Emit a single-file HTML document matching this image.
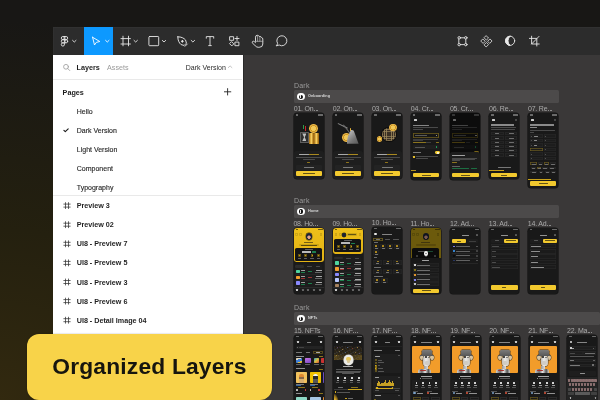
<!DOCTYPE html>
<html><head><meta charset="utf-8">
<style>
*{margin:0;padding:0;box-sizing:border-box}
html,body{width:600px;height:400px;overflow:hidden}
body{position:relative;font-family:"Liberation Sans",sans-serif;
background:radial-gradient(ellipse 420px 380px at 0px 400px,#32290f 0%,#24200f 45%,#181715 100%);}
.abs{position:absolute}
#toolbar{left:52.8px;top:26.8px;width:547.2px;height:28.2px;background:#2c2c2c;box-shadow:inset 0.7px 0.7px 0 #333}
#blue{left:83.5px;top:27px;width:29px;height:28.5px;background:#0d99ff}
#panel{left:53px;top:55.4px;width:189.6px;height:345px;background:#fff}
#canvas{left:243px;top:55.2px;width:357px;height:345px;background:#3a3838;border-left:1.5px solid #2a2a2a}
#tline{left:53px;top:54.6px;width:547px;height:0.9px;background:#232323}
#label{left:27px;top:333.8px;width:245px;height:65.5px;background:#f8d349;border-radius:12px;box-shadow:0 0 1.2px rgba(0,0,0,.55)}
#label span{position:absolute;left:25.3px;top:18.8px;font-weight:bold;font-size:22.8px;letter-spacing:0.18px;color:#16150f;white-space:nowrap}
svg{position:absolute;left:0;top:0}
.t{position:absolute;white-space:nowrap;line-height:1}
#pc,#cv,#label{will-change:transform}
.b{font-weight:bold}

#cv i{position:absolute;display:block}
.ph{position:absolute;background:#191919;border-radius:3.2px;overflow:hidden;box-shadow:0 0 0 0.6px #121212}
.ph i{position:absolute;display:block}
</style></head><body>
<div id="toolbar" class="abs"></div>
<div id="tline" class="abs"></div>
<div id="blue" class="abs"></div>
<div id="panel" class="abs"></div>
<div id="canvas" class="abs"></div>
<div id="pc" class="abs" style="left:0;top:0">
<div class="t b" style="left:76.6px;top:64.1px;font-size:7.2px;color:#1e1e1e">Layers</div>
<div class="t" style="left:107px;top:64.1px;font-size:7.2px;color:#9a9a9a">Assets</div>
<div class="t" style="left:185.8px;top:64.1px;font-size:7.0px;color:#2a2a2a">Dark Version</div>
<div class="abs" style="left:53px;top:79px;width:189px;height:0.8px;background:#e9e9e9"></div>
<div class="t b" style="left:62.6px;top:88.5px;font-size:7.2px;color:#1e1e1e">Pages</div>
<div class="t" style="left:76.8px;top:108.0px;font-size:7.0px;color:#262626;-webkit-text-stroke:0.12px #262626">Hello</div>
<div class="t" style="left:76.8px;top:127.0px;font-size:7.0px;color:#1e1e1e;-webkit-text-stroke:0.12px #262626">Dark Version</div>
<div class="t" style="left:76.8px;top:146.1px;font-size:7.0px;color:#262626;-webkit-text-stroke:0.12px #262626">Light Version</div>
<div class="t" style="left:76.8px;top:165.2px;font-size:7.0px;color:#262626;-webkit-text-stroke:0.12px #262626">Component</div>
<div class="t" style="left:76.8px;top:184.3px;font-size:7.0px;color:#262626;-webkit-text-stroke:0.12px #262626">Typography</div>
<div class="abs" style="left:53px;top:195.2px;width:189px;height:0.8px;background:#e9e9e9"></div>
<div class="t b" style="left:76.7px;top:202.1px;font-size:7.2px;color:#1e1e1e">Preview 3</div>
<div class="t b" style="left:76.7px;top:221.2px;font-size:7.2px;color:#1e1e1e">Preview 02</div>
<div class="t b" style="left:76.7px;top:240.3px;font-size:7.2px;color:#1e1e1e">UI8 - Preview 7</div>
<div class="t b" style="left:76.7px;top:259.4px;font-size:7.2px;color:#1e1e1e">UI8 - Preview 5</div>
<div class="t b" style="left:76.7px;top:278.5px;font-size:7.2px;color:#1e1e1e">UI8 - Preview 3</div>
<div class="t b" style="left:76.7px;top:297.6px;font-size:7.2px;color:#1e1e1e">UI8 - Preview 6</div>
<div class="t b" style="left:76.7px;top:316.7px;font-size:7.2px;color:#1e1e1e">UI8 - Detail Image 04</div>
</div>
<svg id="picons" width="600" height="400" viewBox="0 0 600 400" fill="none" stroke="#333" stroke-width="0.8" stroke-linecap="round" stroke-linejoin="round">
 <circle cx="66" cy="66.8" r="2.4" stroke="#9a9a9a"/>
 <path d="M67.8 68.6L69.8 70.6" stroke="#9a9a9a"/>
 <path d="M228.3 67.6L230.1 65.9L231.9 67.6" stroke="#aaa" stroke-width="0.7"/>
 <path d="M227.6 88.6V95M224.4 91.8H230.8" stroke="#222" stroke-width="0.9"/>
 <path d="M63.9 130.3L65.3 131.7L68.2 128.8" stroke="#1a1a1a" stroke-width="1.1"/>
 <g id="hash" stroke="#333" stroke-width="0.75">
<path d="M65.5 202.6V208.6M68.5 202.6V208.6M63.8 204.1H70.2M63.8 207.1H70.2"/>
<path d="M65.5 221.7V227.7M68.5 221.7V227.7M63.8 223.2H70.2M63.8 226.2H70.2"/>
<path d="M65.5 240.8V246.8M68.5 240.8V246.8M63.8 242.3H70.2M63.8 245.3H70.2"/>
<path d="M65.5 259.9V265.9M68.5 259.9V265.9M63.8 261.4H70.2M63.8 264.4H70.2"/>
<path d="M65.5 279.0V285.0M68.5 279.0V285.0M63.8 280.5H70.2M63.8 283.5H70.2"/>
<path d="M65.5 298.1V304.1M68.5 298.1V304.1M63.8 299.6H70.2M63.8 302.6H70.2"/>
<path d="M65.5 317.2V323.2M68.5 317.2V323.2M63.8 318.7H70.2M63.8 321.7H70.2"/>
 </g>
</svg>

<svg id="icons" width="600" height="400" viewBox="0 0 600 400" fill="none" stroke="#e8e8e8" stroke-width="0.9" stroke-linecap="round" stroke-linejoin="round">
 <!-- figma logo -->
 <g transform="translate(61.1,36.0)">
  <path d="M3.4 0.5H1.8A1.6 1.6 0 0 0 1.8 3.7H3.4Z"/>
  <path d="M3.4 0.5H5A1.6 1.6 0 0 1 5 3.7H3.4Z"/>
  <path d="M3.4 3.7H1.8A1.6 1.6 0 0 0 1.8 6.9H3.4Z"/>
  <circle cx="5" cy="5.3" r="1.6"/>
  <path d="M3.4 6.9H1.8A1.6 1.6 0 1 0 3.4 8.5Z"/>
 </g>
 <path d="M72.6 40.4L74.3 42L76 40.4"/>
 <!-- cursor -->
 <path d="M92.6 37.3L99.8 41.5L96.3 42.4L94.5 45L92.6 37.3Z" stroke="#fff"/>
 <path d="M105.6 40.4L107.3 42L109 40.4" stroke="#fff"/>
 <!-- frame -->
 <path d="M123 36.2V45.8M128.5 36.2V45.8M121 38.6H130.4M121 44H130.4"/>
 <path d="M134 40.4L135.7 42L137.4 40.4"/>
 <!-- rect -->
 <rect x="148.9" y="36.5" width="9.8" height="9.2" rx="0.8"/>
 <path d="M162.3 40.4L164 42L165.7 40.4"/>
 <!-- pen -->
 <g transform="translate(182.2,41.2) rotate(-45)">
  <path d="M0 -6.2C2.6 -3.6 3.4 -1 3.2 1.6L1.6 4.4H-1.6L-3.2 1.6C-3.4 -1 -2.6 -3.6 0 -6.2Z"/>
  <circle cx="0" cy="0.2" r="0.8" fill="#e8e8e8"/>
  <path d="M-1.6 5.6H1.6"/>
 </g>
 <path d="M191.2 40.4L192.9 42L194.6 40.4"/>
 <!-- T -->
 <path d="M206.3 38.6V36.6H213.7V38.6M210 36.6V45.6M208.3 45.6H211.7" stroke-linecap="butt"/>
 <!-- shapes -->
 <rect x="230" y="36.7" width="3.6" height="3.6"/>
 <path d="M237 36.5V40.5M235 38.5H239"/>
 <path d="M231.8 41.9L233.8 43.9L231.8 45.9L229.8 43.9Z"/>
 <rect x="235.3" y="42.1" width="3.6" height="3.6"/>
 <!-- hand -->
 <path d="M255.5 41.4V37.2Q255.5 35.3 257.3 35.3Q258.7 35.3 259.1 36.4Q261.3 36.2 261.5 37.6Q262.8 37.8 262.8 39V44Q262.8 47.3 259.2 47.3H258.3Q256.7 47.3 255.3 45.9L252.6 43.1Q251.9 42.2 252.6 41.5Q253.4 40.9 254.3 41.6L255.5 42.6"/>
 <path d="M257.6 36V41.2M259.9 36.8V41.2M255.5 41.3H262.8" stroke-width="0.7" stroke="#bdbdbd"/>
 <!-- comment -->
 <path d="M276.7 45.7L277.6 43.4A5 5 0 1 1 279.2 45L276.7 45.7Z"/>
 <!-- right icons -->
 <path d="M459.2 37.8H465.8V44.6H459.2Z"/>
 <circle cx="459.2" cy="37.8" r="1.25" fill="#2c2c2c"/>
 <circle cx="465.8" cy="37.8" r="1.25" fill="#2c2c2c"/>
 <circle cx="459.2" cy="44.6" r="1.25" fill="#2c2c2c"/>
 <circle cx="465.8" cy="44.6" r="1.25" fill="#2c2c2c"/>
 <g transform="translate(486.4,41.3)" stroke-width="0.8">
  <path d="M0 -5.4L2.1 -3.3L0 -1.2L-2.1 -3.3Z"/>
  <path d="M0 5.4L2.1 3.3L0 1.2L-2.1 3.3Z"/>
  <path d="M-5.4 0L-3.3 2.1L-1.2 0L-3.3 -2.1Z"/>
  <path d="M5.4 0L3.3 2.1L1.2 0L3.3 -2.1Z"/>
 </g>
 <circle cx="510.1" cy="40.8" r="4.6"/>
 <path d="M510.1 36.2A4.6 4.6 0 0 0 510.1 45.4A6 6 0 0 1 510.1 36.2Z" fill="#e8e8e8"/>
 <path d="M531.6 36.2V44H539.2M529.4 38.4H536.8V46M531.6 44L539 36.4"/>
</svg>
<div id="cv" class="abs" style="left:0;top:0;width:600px;height:400px;overflow:hidden">
<span class="t" style="left:294.00px;top:82.00px;font-size:7px;color:#9b9b9b;letter-spacing:0.2px">Dark</span>
<i style="left:293.60px;top:90.00px;width:265.10px;height:12.80px;background:#4c4a4a;border-radius:1.5px;"></i>
<i style="left:297.30px;top:92.70px;width:7.80px;height:7.80px;border-radius:50%;background:#fff;"></i>
<i style="left:299.20px;top:94.50px;width:4.20px;height:4.20px;border-radius:50%;background:#111;"></i>
<i style="left:299.70px;top:95.40px;width:0.60px;height:2.40px;background:#e8e8e8;"></i>
<span class="t" style="left:308.00px;top:95.00px;font-size:3.8px;color:#dadada;font-weight:bold;letter-spacing:0.05px">Onboarding</span>
<span class="t" style="left:293.70px;top:105.30px;font-size:7px;color:#ababab;letter-spacing:-0.2px">01. On<span style="display:inline-block;width:0.5px"></span><span style="display:inline-block;width:0.95px;height:0.95px;background:#8c8c8c;margin-right:0.7px"></span><span style="display:inline-block;width:0.95px;height:0.95px;background:#8c8c8c;margin-right:0.7px"></span><span style="display:inline-block;width:0.95px;height:0.95px;background:#8c8c8c;margin-right:0.7px"></span></span>
<div class="ph" style="left:294.00px;top:113.40px;width:30px;height:66.00px">
<i style="left:2.00px;top:1.00px;width:2.40px;height:1.30px;background:#6a6a6a;border-radius:0.3px;"></i>
<i style="left:24.20px;top:1.00px;width:4.80px;height:1.30px;background:#6a6a6a;border-radius:0.3px;"></i>
<i style="left:6.00px;top:18.40px;width:8.70px;height:10.80px;background:#5e5e5e;border-radius:0.5px;"></i>
<i style="left:6.80px;top:19.20px;width:7.10px;height:9.20px;background:#2e2e2e;border-radius:0.3px;"></i>
<i style="left:8.3px;top:20px;width:4.2px;height:7.6px;background:#bdbdbd;clip-path:polygon(0 0,100% 0,58% 50%,100% 100%,0 100%,42% 50%)"></i>
<i style="left:9.00px;top:11.60px;width:1.00px;height:3.80px;background:#2f9a4a;"></i>
<i style="left:10.60px;top:12.80px;width:1.00px;height:5.00px;background:#c92a2a;"></i>
<i style="left:15.00px;top:10.80px;width:9.20px;height:9.20px;border-radius:50%;background:radial-gradient(circle at 50% 50%,#f0c858 0 35%,#c88e1c 45%,#f0c050 62%,#a86e12 85%);"></i>
<i style="left:15.10px;top:19.90px;width:4.60px;height:10.70px;background:linear-gradient(90deg,#9a6410,#e8b848 35%,#f4cc60 50%,#b8801a 80%,#8a5810);border-radius:0.6px;"></i>
<i style="left:19.90px;top:19.90px;width:4.90px;height:10.70px;background:linear-gradient(90deg,#9a6410,#e8b848 35%,#f4cc60 50%,#b8801a 80%,#8a5810);border-radius:0.6px;"></i>
<i style="left:0.00px;top:37.20px;width:30.00px;height:28.80px;background:#1e1e1e;border-radius:2.8px;"></i>
<i style="left:5.20px;top:40.65px;width:9.90px;height:1.30px;background:#a8a8a8;border-radius:0.3px;"></i>
<i style="left:15.20px;top:40.65px;width:9.80px;height:1.30px;background:#a98920;border-radius:0.3px;"></i>
<i style="left:2.20px;top:43.85px;width:25.60px;height:0.70px;background:#4b4b4b;border-radius:0.3px;"></i>
<i style="left:9.20px;top:45.45px;width:11.60px;height:0.70px;background:#4b4b4b;border-radius:0.3px;"></i>
<i style="left:13.30px;top:48.85px;width:2.40px;height:0.70px;background:#90741b;border-radius:0.3px;"></i>
<i style="left:2.00px;top:51.90px;width:26.20px;height:4.40px;background:#232323;border-radius:0.9px;"></i>
<i style="left:9.80px;top:53.70px;width:10.60px;height:0.80px;background:#7a7a7a;border-radius:0.3px;"></i>
<i style="left:2.00px;top:57.70px;width:26.20px;height:4.90px;background:#f2c92e;border-radius:1.1px;"></i>
<i style="left:9.10px;top:59.75px;width:12.00px;height:0.80px;background:#625215;border-radius:0.3px;"></i>
</div>
<span class="t" style="left:332.70px;top:105.30px;font-size:7px;color:#ababab;letter-spacing:-0.2px">02. On<span style="display:inline-block;width:0.5px"></span><span style="display:inline-block;width:0.95px;height:0.95px;background:#8c8c8c;margin-right:0.7px"></span><span style="display:inline-block;width:0.95px;height:0.95px;background:#8c8c8c;margin-right:0.7px"></span><span style="display:inline-block;width:0.95px;height:0.95px;background:#8c8c8c;margin-right:0.7px"></span></span>
<div class="ph" style="left:333.00px;top:113.40px;width:30px;height:66.00px">
<i style="left:2.00px;top:1.00px;width:2.40px;height:1.30px;background:#6a6a6a;border-radius:0.3px;"></i>
<i style="left:24.20px;top:1.00px;width:4.80px;height:1.30px;background:#6a6a6a;border-radius:0.3px;"></i>
<i style="left:4.6px;top:9.6px;width:11px;height:1.4px;background:#8a8a8a;transform:rotate(26deg);transform-origin:0 0;border-radius:1px"></i>
<i style="left:10.4px;top:11.8px;width:1.2px;height:13px;background:#6e6e6e;transform:rotate(-38deg);transform-origin:0 0"></i>
<i style="left:8.80px;top:19.20px;width:9.20px;height:9.20px;border-radius:50%;background:radial-gradient(circle at 50% 50%,#f0c858 0 35%,#c88e1c 45%,#f0c050 62%,#a86e12 85%);"></i>
<i style="left:13.6px;top:16.2px;width:12px;height:14.2px;background:linear-gradient(135deg,#cfcfcf,#777 60%,#555);clip-path:polygon(38% 0,60% 8%,100% 100%,0 100%,10% 50%)"></i>
<i style="left:17.00px;top:15.00px;width:1.20px;height:2.60px;background:#e7b43a;border-radius:0.5px;"></i>
<i style="left:0.00px;top:37.20px;width:30.00px;height:28.80px;background:#1e1e1e;border-radius:2.8px;"></i>
<i style="left:5.20px;top:40.65px;width:9.90px;height:1.30px;background:#a8a8a8;border-radius:0.3px;"></i>
<i style="left:15.20px;top:40.65px;width:9.80px;height:1.30px;background:#a98920;border-radius:0.3px;"></i>
<i style="left:2.20px;top:43.85px;width:25.60px;height:0.70px;background:#4b4b4b;border-radius:0.3px;"></i>
<i style="left:9.20px;top:45.45px;width:11.60px;height:0.70px;background:#4b4b4b;border-radius:0.3px;"></i>
<i style="left:13.30px;top:48.85px;width:2.40px;height:0.70px;background:#90741b;border-radius:0.3px;"></i>
<i style="left:2.00px;top:51.90px;width:26.20px;height:4.40px;background:#232323;border-radius:0.9px;"></i>
<i style="left:9.80px;top:53.70px;width:10.60px;height:0.80px;background:#7a7a7a;border-radius:0.3px;"></i>
<i style="left:2.00px;top:57.70px;width:26.20px;height:4.90px;background:#f2c92e;border-radius:1.1px;"></i>
<i style="left:9.10px;top:59.75px;width:12.00px;height:0.80px;background:#625215;border-radius:0.3px;"></i>
</div>
<span class="t" style="left:371.90px;top:105.30px;font-size:7px;color:#ababab;letter-spacing:-0.2px">03. On<span style="display:inline-block;width:0.5px"></span><span style="display:inline-block;width:0.95px;height:0.95px;background:#8c8c8c;margin-right:0.7px"></span><span style="display:inline-block;width:0.95px;height:0.95px;background:#8c8c8c;margin-right:0.7px"></span><span style="display:inline-block;width:0.95px;height:0.95px;background:#8c8c8c;margin-right:0.7px"></span></span>
<div class="ph" style="left:372.20px;top:113.40px;width:30px;height:66.00px">
<i style="left:2.00px;top:1.00px;width:2.40px;height:1.30px;background:#6a6a6a;border-radius:0.3px;"></i>
<i style="left:24.20px;top:1.00px;width:4.80px;height:1.30px;background:#6a6a6a;border-radius:0.3px;"></i>
<i style="left:10.20px;top:14.40px;width:13.20px;height:13.20px;border-radius:50%;background:repeating-linear-gradient(90deg,#8a7650 0 0.8px,#3a3024 0.8px 2.2px);box-shadow:0 0 0 1px #0c0c0c"></i>
<i style="left:10.20px;top:14.40px;width:13.20px;height:13.20px;border-radius:50%;background:repeating-linear-gradient(0deg,rgba(160,140,95,.65) 0 0.8px,transparent 0.8px 2.2px);"></i>
<i style="left:17.20px;top:10.20px;width:7.20px;height:7.20px;border-radius:50%;background:radial-gradient(circle at 50% 50%,#f0c858 0 35%,#c88e1c 45%,#f0c050 62%,#a86e12 85%);"></i>
<i style="left:4.40px;top:22.80px;width:5.60px;height:5.60px;border-radius:50%;background:radial-gradient(circle at 50% 50%,#f0c858 0 35%,#c88e1c 45%,#f0c050 62%,#a86e12 85%);"></i>
<i style="left:0.00px;top:37.20px;width:30.00px;height:28.80px;background:#1e1e1e;border-radius:2.8px;"></i>
<i style="left:5.20px;top:40.65px;width:9.90px;height:1.30px;background:#a8a8a8;border-radius:0.3px;"></i>
<i style="left:15.20px;top:40.65px;width:9.80px;height:1.30px;background:#a98920;border-radius:0.3px;"></i>
<i style="left:2.20px;top:43.85px;width:25.60px;height:0.70px;background:#4b4b4b;border-radius:0.3px;"></i>
<i style="left:9.20px;top:45.45px;width:11.60px;height:0.70px;background:#4b4b4b;border-radius:0.3px;"></i>
<i style="left:13.30px;top:48.85px;width:2.40px;height:0.70px;background:#90741b;border-radius:0.3px;"></i>
<i style="left:2.00px;top:51.90px;width:26.20px;height:4.40px;background:#232323;border-radius:0.9px;"></i>
<i style="left:9.80px;top:53.70px;width:10.60px;height:0.80px;background:#7a7a7a;border-radius:0.3px;"></i>
<i style="left:2.00px;top:57.70px;width:26.20px;height:4.90px;background:#f2c92e;border-radius:1.1px;"></i>
<i style="left:9.10px;top:59.75px;width:12.00px;height:0.80px;background:#625215;border-radius:0.3px;"></i>
</div>
<span class="t" style="left:410.80px;top:105.30px;font-size:7px;color:#ababab;letter-spacing:-0.2px">04. Cr<span style="display:inline-block;width:0.5px"></span><span style="display:inline-block;width:0.95px;height:0.95px;background:#8c8c8c;margin-right:0.7px"></span><span style="display:inline-block;width:0.95px;height:0.95px;background:#8c8c8c;margin-right:0.7px"></span><span style="display:inline-block;width:0.95px;height:0.95px;background:#8c8c8c;margin-right:0.7px"></span></span>
<div class="ph" style="left:411.10px;top:113.40px;width:30px;height:66.40px">
<i style="left:2.00px;top:1.00px;width:2.40px;height:1.30px;background:#6a6a6a;border-radius:0.3px;"></i>
<i style="left:24.20px;top:1.00px;width:4.80px;height:1.30px;background:#6a6a6a;border-radius:0.3px;"></i>
<i style="left:3.00px;top:5.80px;width:2.50px;height:2.10px;background:#d0d0d0;border-radius:0.6px;"></i>
<i style="left:2.20px;top:11.15px;width:15.70px;height:1.30px;background:#868686;border-radius:0.3px;"></i>
<i style="left:2.20px;top:13.95px;width:24.80px;height:0.70px;background:#4a4a4a;border-radius:0.3px;"></i>
<i style="left:2.20px;top:15.35px;width:10.00px;height:0.70px;background:#4a4a4a;border-radius:0.3px;"></i>
<i style="left:1.80px;top:19.40px;width:26.40px;height:5.00px;background:#161616;border-radius:1.2px;box-shadow:inset 0 0 0 0.55px #9c8220"></i>
<i style="left:4.00px;top:21.55px;width:12.00px;height:0.70px;background:#5a5a5a;border-radius:0.3px;"></i>
<i style="left:24.80px;top:21.20px;width:1.60px;height:1.40px;background:#cfcfcf;border-radius:0.4px;"></i>
<i style="left:2.20px;top:25.65px;width:24.80px;height:0.70px;background:#3e3e3e;border-radius:0.3px;"></i>
<i style="left:2.20px;top:27.05px;width:10.00px;height:0.70px;background:#3e3e3e;border-radius:0.3px;"></i>
<i style="left:2.20px;top:28.50px;width:13.00px;height:0.80px;background:#8c751e;border-radius:0.3px;"></i>
<i style="left:15.40px;top:28.60px;width:4.60px;height:0.60px;background:#3e3e3e;border-radius:0.3px;"></i>
<i style="left:24.80px;top:28.50px;width:3.00px;height:0.80px;background:#8c751e;border-radius:0.3px;"></i>
<i style="left:1.80px;top:31.80px;width:26.40px;height:3.40px;background:#1f1f1f;border-radius:0.8px;"></i>
<i style="left:3.60px;top:33.15px;width:10.00px;height:0.70px;background:#555;border-radius:0.3px;"></i>
<i style="left:24.80px;top:32.80px;width:1.50px;height:1.60px;background:#1f9c5c;border-radius:0.3px;"></i>
<i style="left:2.20px;top:38.85px;width:8.00px;height:0.70px;background:#7a7a7a;border-radius:0.3px;"></i>
<i style="left:23.60px;top:37.90px;width:5.00px;height:2.80px;background:#f2c92e;border-radius:1.4px;"></i>
<i style="left:25.50px;top:38.20px;width:2.20px;height:2.20px;border-radius:50%;background:#fff;"></i>
<i style="left:2.00px;top:43.10px;width:2.00px;height:2.00px;background:#f2c92e;border-radius:0.4px;"></i>
<i style="left:5.40px;top:43.05px;width:22.00px;height:0.70px;background:#4a4a4a;border-radius:0.3px;"></i>
<i style="left:5.40px;top:44.45px;width:12.00px;height:0.70px;background:#4a4a4a;border-radius:0.3px;"></i>
<i style="left:0.00px;top:56.70px;width:4.60px;height:0.80px;background:#b8951c;"></i>
<i style="left:2.00px;top:59.40px;width:26.40px;height:4.40px;background:#f2c92e;border-radius:1.1px;"></i>
<i style="left:10.70px;top:61.20px;width:9.00px;height:0.80px;background:#625215;border-radius:0.3px;"></i>
</div>
<span class="t" style="left:449.90px;top:105.30px;font-size:7px;color:#ababab;letter-spacing:-0.2px">05. Cr<span style="display:inline-block;width:0.5px"></span><span style="display:inline-block;width:0.95px;height:0.95px;background:#8c8c8c;margin-right:0.7px"></span><span style="display:inline-block;width:0.95px;height:0.95px;background:#8c8c8c;margin-right:0.7px"></span><span style="display:inline-block;width:0.95px;height:0.95px;background:#8c8c8c;margin-right:0.7px"></span></span>
<div class="ph" style="left:450.20px;top:113.40px;width:30px;height:66.40px">
<i style="left:2.00px;top:1.00px;width:2.40px;height:1.30px;background:#6a6a6a;border-radius:0.3px;"></i>
<i style="left:24.20px;top:1.00px;width:4.80px;height:1.30px;background:#6a6a6a;border-radius:0.3px;"></i>
<i style="left:3.00px;top:5.80px;width:2.50px;height:2.10px;background:#d0d0d0;border-radius:0.6px;"></i>
<i style="left:2.20px;top:11.15px;width:15.70px;height:1.30px;background:#868686;border-radius:0.3px;"></i>
<i style="left:2.20px;top:13.95px;width:24.80px;height:0.70px;background:#4a4a4a;border-radius:0.3px;"></i>
<i style="left:2.20px;top:15.35px;width:10.00px;height:0.70px;background:#4a4a4a;border-radius:0.3px;"></i>
<i style="left:1.80px;top:19.40px;width:26.40px;height:5.00px;background:#161616;border-radius:1.2px;box-shadow:inset 0 0 0 0.55px #9c8220"></i>
<i style="left:4.00px;top:21.55px;width:12.00px;height:0.70px;background:#5a5a5a;border-radius:0.3px;"></i>
<i style="left:24.80px;top:21.20px;width:1.60px;height:1.40px;background:#cfcfcf;border-radius:0.4px;"></i>
<i style="left:2.20px;top:25.65px;width:24.80px;height:0.70px;background:#3e3e3e;border-radius:0.3px;"></i>
<i style="left:2.20px;top:27.05px;width:10.00px;height:0.70px;background:#3e3e3e;border-radius:0.3px;"></i>
<i style="left:2.20px;top:28.50px;width:13.00px;height:0.80px;background:#8c751e;border-radius:0.3px;"></i>
<i style="left:15.40px;top:28.60px;width:4.60px;height:0.60px;background:#3e3e3e;border-radius:0.3px;"></i>
<i style="left:24.80px;top:28.50px;width:3.00px;height:0.80px;background:#8c751e;border-radius:0.3px;"></i>
<i style="left:1.80px;top:31.80px;width:26.40px;height:3.40px;background:#1f1f1f;border-radius:0.8px;"></i>
<i style="left:3.60px;top:33.15px;width:10.00px;height:0.70px;background:#555;border-radius:0.3px;"></i>
<i style="left:24.80px;top:32.80px;width:1.50px;height:1.60px;background:#1f9c5c;border-radius:0.3px;"></i>
<i style="left:2.20px;top:38.85px;width:8.00px;height:0.70px;background:#7a7a7a;border-radius:0.3px;"></i>
<i style="left:23.60px;top:37.90px;width:5.00px;height:2.80px;background:#f2c92e;border-radius:1.4px;"></i>
<i style="left:25.50px;top:38.20px;width:2.20px;height:2.20px;border-radius:50%;background:#fff;"></i>
<i style="left:2.00px;top:43.10px;width:2.00px;height:2.00px;background:#f2c92e;border-radius:0.4px;"></i>
<i style="left:5.40px;top:43.05px;width:22.00px;height:0.70px;background:#4a4a4a;border-radius:0.3px;"></i>
<i style="left:5.40px;top:44.45px;width:12.00px;height:0.70px;background:#4a4a4a;border-radius:0.3px;"></i>
<i style="left:0.00px;top:56.70px;width:4.60px;height:0.80px;background:#b8951c;"></i>
<i style="left:0.00px;top:0.00px;width:30.00px;height:66.40px;background:rgba(0,0,0,0.5);"></i>
<i style="left:0.00px;top:38.80px;width:30.00px;height:27.60px;background:#1d1d1d;border-radius:2.6px;"></i>
<i style="left:2.20px;top:41.40px;width:12.50px;height:1.20px;background:#a1a1a1;border-radius:0.3px;"></i>
<i style="left:2.20px;top:44.25px;width:25.00px;height:0.70px;background:#4a4a4a;border-radius:0.3px;"></i>
<i style="left:2.20px;top:45.65px;width:22.50px;height:0.70px;background:#4a4a4a;border-radius:0.3px;"></i>
<i style="left:2.20px;top:47.05px;width:8.00px;height:0.70px;background:#4a4a4a;border-radius:0.3px;"></i>
<i style="left:2.20px;top:48.80px;width:5.00px;height:0.80px;background:#8c751e;border-radius:0.3px;"></i>
<i style="left:2.20px;top:52.45px;width:8.00px;height:0.70px;background:#626262;border-radius:0.3px;"></i>
<i style="left:2.20px;top:54.80px;width:17.00px;height:0.80px;background:#1c6e42;border-radius:0.3px;"></i>
<i style="left:20.50px;top:54.80px;width:6.00px;height:0.80px;background:#1c6e42;border-radius:0.3px;"></i>
<i style="left:2.00px;top:59.40px;width:26.40px;height:4.40px;background:#f2c92e;border-radius:1.1px;"></i>
<i style="left:10.70px;top:61.20px;width:9.00px;height:0.80px;background:#625215;border-radius:0.3px;"></i>
</div>
<span class="t" style="left:488.95px;top:105.30px;font-size:7px;color:#ababab;letter-spacing:-0.2px">06. Re<span style="display:inline-block;width:0.5px"></span><span style="display:inline-block;width:0.95px;height:0.95px;background:#8c8c8c;margin-right:0.7px"></span><span style="display:inline-block;width:0.95px;height:0.95px;background:#8c8c8c;margin-right:0.7px"></span><span style="display:inline-block;width:0.95px;height:0.95px;background:#8c8c8c;margin-right:0.7px"></span></span>
<div class="ph" style="left:489.25px;top:113.40px;width:30px;height:66.00px">
<i style="left:2.00px;top:1.00px;width:2.40px;height:1.30px;background:#6a6a6a;border-radius:0.3px;"></i>
<i style="left:24.20px;top:1.00px;width:4.80px;height:1.30px;background:#6a6a6a;border-radius:0.3px;"></i>
<i style="left:3.00px;top:5.80px;width:2.50px;height:2.10px;background:#d0d0d0;border-radius:0.6px;"></i>
<i style="left:25.90px;top:5.80px;width:2.20px;height:2.20px;border-radius:50%;background:transparent;box-shadow:inset 0 0 0 0.5px #666"></i>
<i style="left:2.00px;top:11.00px;width:23.00px;height:1.40px;background:#8a8a8a;border-radius:0.3px;"></i>
<i style="left:2.00px;top:13.95px;width:25.00px;height:0.70px;background:#4a4a4a;border-radius:0.3px;"></i>
<i style="left:2.00px;top:15.55px;width:24.00px;height:0.70px;background:#4a4a4a;border-radius:0.3px;"></i>
<i style="left:2.20px;top:18.55px;width:12.20px;height:3.30px;background:#1c1c1c;border-radius:0.8px;box-shadow:inset 0 0 0 0.5px #2c2c2c"></i>
<i style="left:16.20px;top:18.55px;width:11.80px;height:3.30px;background:#1c1c1c;border-radius:0.8px;box-shadow:inset 0 0 0 0.5px #2c2c2c"></i>
<i style="left:5.60px;top:19.90px;width:4.60px;height:0.60px;background:#6e6e6e;border-radius:0.3px;"></i>
<i style="left:19.80px;top:19.90px;width:4.60px;height:0.60px;background:#6e6e6e;border-radius:0.3px;"></i>
<i style="left:2.20px;top:22.85px;width:12.20px;height:3.30px;background:#1c1c1c;border-radius:0.8px;box-shadow:inset 0 0 0 0.5px #2c2c2c"></i>
<i style="left:16.20px;top:22.85px;width:11.80px;height:3.30px;background:#1c1c1c;border-radius:0.8px;box-shadow:inset 0 0 0 0.5px #2c2c2c"></i>
<i style="left:5.60px;top:24.20px;width:4.60px;height:0.60px;background:#6e6e6e;border-radius:0.3px;"></i>
<i style="left:19.80px;top:24.20px;width:4.60px;height:0.60px;background:#6e6e6e;border-radius:0.3px;"></i>
<i style="left:2.20px;top:27.15px;width:12.20px;height:3.30px;background:#1c1c1c;border-radius:0.8px;box-shadow:inset 0 0 0 0.5px #2c2c2c"></i>
<i style="left:16.20px;top:27.15px;width:11.80px;height:3.30px;background:#1c1c1c;border-radius:0.8px;box-shadow:inset 0 0 0 0.5px #2c2c2c"></i>
<i style="left:5.60px;top:28.50px;width:4.60px;height:0.60px;background:#6e6e6e;border-radius:0.3px;"></i>
<i style="left:19.80px;top:28.50px;width:4.60px;height:0.60px;background:#6e6e6e;border-radius:0.3px;"></i>
<i style="left:2.20px;top:31.45px;width:12.20px;height:3.30px;background:#1c1c1c;border-radius:0.8px;box-shadow:inset 0 0 0 0.5px #2c2c2c"></i>
<i style="left:16.20px;top:31.45px;width:11.80px;height:3.30px;background:#1c1c1c;border-radius:0.8px;box-shadow:inset 0 0 0 0.5px #2c2c2c"></i>
<i style="left:5.60px;top:32.80px;width:4.60px;height:0.60px;background:#6e6e6e;border-radius:0.3px;"></i>
<i style="left:19.80px;top:32.80px;width:4.60px;height:0.60px;background:#6e6e6e;border-radius:0.3px;"></i>
<i style="left:2.20px;top:35.75px;width:12.20px;height:3.30px;background:#1c1c1c;border-radius:0.8px;box-shadow:inset 0 0 0 0.5px #2c2c2c"></i>
<i style="left:16.20px;top:35.75px;width:11.80px;height:3.30px;background:#1c1c1c;border-radius:0.8px;box-shadow:inset 0 0 0 0.5px #2c2c2c"></i>
<i style="left:5.60px;top:37.10px;width:4.60px;height:0.60px;background:#6e6e6e;border-radius:0.3px;"></i>
<i style="left:19.80px;top:37.10px;width:4.60px;height:0.60px;background:#6e6e6e;border-radius:0.3px;"></i>
<i style="left:2.20px;top:40.05px;width:12.20px;height:3.30px;background:#1c1c1c;border-radius:0.8px;box-shadow:inset 0 0 0 0.5px #2c2c2c"></i>
<i style="left:16.20px;top:40.05px;width:11.80px;height:3.30px;background:#1c1c1c;border-radius:0.8px;box-shadow:inset 0 0 0 0.5px #2c2c2c"></i>
<i style="left:5.60px;top:41.40px;width:4.60px;height:0.60px;background:#6e6e6e;border-radius:0.3px;"></i>
<i style="left:19.80px;top:41.40px;width:4.60px;height:0.60px;background:#6e6e6e;border-radius:0.3px;"></i>
<i style="left:9.00px;top:53.75px;width:13.00px;height:0.70px;background:#777;border-radius:0.3px;"></i>
<i style="left:0.00px;top:56.70px;width:15.00px;height:0.80px;background:#c9a21a;"></i>
<i style="left:2.20px;top:59.50px;width:25.80px;height:4.20px;background:#f2c92e;border-radius:1.1px;"></i>
<i style="left:12.10px;top:61.20px;width:6.00px;height:0.80px;background:#625215;border-radius:0.3px;"></i>
</div>
<span class="t" style="left:527.95px;top:105.30px;font-size:7px;color:#ababab;letter-spacing:-0.2px">07. Re<span style="display:inline-block;width:0.5px"></span><span style="display:inline-block;width:0.95px;height:0.95px;background:#8c8c8c;margin-right:0.7px"></span><span style="display:inline-block;width:0.95px;height:0.95px;background:#8c8c8c;margin-right:0.7px"></span><span style="display:inline-block;width:0.95px;height:0.95px;background:#8c8c8c;margin-right:0.7px"></span></span>
<div class="ph" style="left:528.25px;top:113.40px;width:30px;height:74.20px">
<i style="left:2.00px;top:1.00px;width:2.40px;height:1.30px;background:#6a6a6a;border-radius:0.3px;"></i>
<i style="left:24.20px;top:1.00px;width:4.80px;height:1.30px;background:#6a6a6a;border-radius:0.3px;"></i>
<i style="left:3.00px;top:5.80px;width:2.50px;height:2.10px;background:#d0d0d0;border-radius:0.6px;"></i>
<i style="left:25.90px;top:5.80px;width:2.20px;height:2.20px;border-radius:50%;background:transparent;box-shadow:inset 0 0 0 0.5px #666"></i>
<i style="left:1.80px;top:11.05px;width:24.00px;height:1.30px;background:#8a8a8a;border-radius:0.3px;"></i>
<i style="left:1.80px;top:13.45px;width:6.50px;height:1.30px;background:#8a8a8a;border-radius:0.3px;"></i>
<i style="left:1.80px;top:16.75px;width:24.50px;height:0.70px;background:#4a4a4a;border-radius:0.3px;"></i>
<i style="left:1.80px;top:18.25px;width:4.00px;height:0.70px;background:#4a4a4a;border-radius:0.3px;"></i>
<i style="left:2.20px;top:21.00px;width:12.40px;height:3.40px;background:#1d1d1d;border-radius:0.8px;box-shadow:inset 0 0 0 0.5px #2a2a2a"></i>
<i style="left:15.80px;top:21.00px;width:12.00px;height:3.40px;background:#1d1d1d;border-radius:0.8px;box-shadow:inset 0 0 0 0.5px #2a2a2a"></i>
<i style="left:3.20px;top:22.35px;width:1.00px;height:0.70px;background:#565656;border-radius:0.3px;"></i>
<i style="left:16.80px;top:22.35px;width:1.00px;height:0.70px;background:#565656;border-radius:0.3px;"></i>
<i style="left:5.60px;top:22.35px;width:4.50px;height:0.70px;background:#8a8a8a;border-radius:0.3px;"></i>
<i style="left:2.20px;top:25.50px;width:12.40px;height:3.40px;background:#1d1d1d;border-radius:0.8px;box-shadow:inset 0 0 0 0.5px #2a2a2a"></i>
<i style="left:15.80px;top:25.50px;width:12.00px;height:3.40px;background:#1d1d1d;border-radius:0.8px;box-shadow:inset 0 0 0 0.5px #2a2a2a"></i>
<i style="left:3.20px;top:26.85px;width:1.00px;height:0.70px;background:#565656;border-radius:0.3px;"></i>
<i style="left:16.80px;top:26.85px;width:1.00px;height:0.70px;background:#565656;border-radius:0.3px;"></i>
<i style="left:5.60px;top:26.85px;width:3.00px;height:0.70px;background:#8a8a8a;border-radius:0.3px;"></i>
<i style="left:2.20px;top:30.00px;width:12.40px;height:3.40px;background:#1d1d1d;border-radius:0.8px;box-shadow:inset 0 0 0 0.5px #2a2a2a"></i>
<i style="left:15.80px;top:30.00px;width:12.00px;height:3.40px;background:#1d1d1d;border-radius:0.8px;box-shadow:inset 0 0 0 0.5px #2a2a2a"></i>
<i style="left:3.20px;top:31.35px;width:1.00px;height:0.70px;background:#565656;border-radius:0.3px;"></i>
<i style="left:16.80px;top:31.35px;width:1.00px;height:0.70px;background:#565656;border-radius:0.3px;"></i>
<i style="left:5.60px;top:31.35px;width:3.00px;height:0.70px;background:#8a8a8a;border-radius:0.3px;"></i>
<i style="left:2.20px;top:34.50px;width:12.40px;height:3.40px;background:#1d1d1d;border-radius:0.8px;box-shadow:inset 0 0 0 0.5px #2a2a2a"></i>
<i style="left:15.80px;top:34.50px;width:12.00px;height:3.40px;background:#1d1d1d;border-radius:0.8px;box-shadow:inset 0 0 0 0.5px #2a2a2a"></i>
<i style="left:3.20px;top:35.85px;width:1.00px;height:0.70px;background:#565656;border-radius:0.3px;"></i>
<i style="left:16.80px;top:35.85px;width:1.00px;height:0.70px;background:#565656;border-radius:0.3px;"></i>
<i style="left:2.20px;top:39.00px;width:12.40px;height:3.40px;background:#1d1d1d;border-radius:0.8px;box-shadow:inset 0 0 0 0.5px #2a2a2a"></i>
<i style="left:15.80px;top:39.00px;width:12.00px;height:3.40px;background:#1d1d1d;border-radius:0.8px;box-shadow:inset 0 0 0 0.5px #2a2a2a"></i>
<i style="left:3.20px;top:40.35px;width:1.00px;height:0.70px;background:#565656;border-radius:0.3px;"></i>
<i style="left:16.80px;top:40.35px;width:1.00px;height:0.70px;background:#565656;border-radius:0.3px;"></i>
<i style="left:2.20px;top:43.50px;width:12.40px;height:3.40px;background:#1d1d1d;border-radius:0.8px;box-shadow:inset 0 0 0 0.5px #2a2a2a"></i>
<i style="left:15.80px;top:43.50px;width:12.00px;height:3.40px;background:#1d1d1d;border-radius:0.8px;box-shadow:inset 0 0 0 0.5px #2a2a2a"></i>
<i style="left:3.20px;top:44.85px;width:1.00px;height:0.70px;background:#565656;border-radius:0.3px;"></i>
<i style="left:16.80px;top:44.85px;width:1.00px;height:0.70px;background:#565656;border-radius:0.3px;"></i>
<i style="left:2.20px;top:34.40px;width:12.40px;height:3.40px;background:#1d1d1d;border-radius:0.8px;box-shadow:inset 0 0 0 0.5px #8a7420"></i>
<i style="left:2.20px;top:49.10px;width:7.00px;height:2.80px;background:#1d1d1d;border-radius:1px;box-shadow:inset 0 0 0 0.5px #8a7420"></i>
<i style="left:3.60px;top:50.20px;width:4.20px;height:0.60px;background:#6e6e6e;border-radius:0.3px;"></i>
<i style="left:10.20px;top:49.10px;width:4.60px;height:2.80px;background:#1d1d1d;border-radius:1px;box-shadow:inset 0 0 0 0.45px #2e2e2e"></i>
<i style="left:11.12px;top:50.20px;width:2.76px;height:0.60px;background:#6e6e6e;border-radius:0.3px;"></i>
<i style="left:16.20px;top:49.10px;width:4.60px;height:2.80px;background:#1d1d1d;border-radius:1px;box-shadow:inset 0 0 0 0.5px #8a7420"></i>
<i style="left:17.12px;top:50.20px;width:2.76px;height:0.60px;background:#6e6e6e;border-radius:0.3px;"></i>
<i style="left:22.00px;top:49.10px;width:5.40px;height:2.80px;background:#1d1d1d;border-radius:1px;box-shadow:inset 0 0 0 0.45px #2e2e2e"></i>
<i style="left:23.08px;top:50.20px;width:3.24px;height:0.60px;background:#6e6e6e;border-radius:0.3px;"></i>
<i style="left:2.60px;top:53.30px;width:5.00px;height:2.80px;background:#1d1d1d;border-radius:1px;box-shadow:inset 0 0 0 0.45px #2e2e2e"></i>
<i style="left:3.60px;top:54.40px;width:3.00px;height:0.60px;background:#6e6e6e;border-radius:0.3px;"></i>
<i style="left:8.60px;top:53.30px;width:4.60px;height:2.80px;background:#1d1d1d;border-radius:1px;box-shadow:inset 0 0 0 0.5px #8a7420"></i>
<i style="left:9.52px;top:54.40px;width:2.76px;height:0.60px;background:#6e6e6e;border-radius:0.3px;"></i>
<i style="left:13.80px;top:53.30px;width:6.00px;height:2.80px;background:#1d1d1d;border-radius:1px;box-shadow:inset 0 0 0 0.45px #2e2e2e"></i>
<i style="left:15.00px;top:54.40px;width:3.60px;height:0.60px;background:#6e6e6e;border-radius:0.3px;"></i>
<i style="left:20.80px;top:53.30px;width:6.80px;height:2.80px;background:#1d1d1d;border-radius:1px;box-shadow:inset 0 0 0 0.45px #2e2e2e"></i>
<i style="left:22.16px;top:54.40px;width:4.08px;height:0.60px;background:#6e6e6e;border-radius:0.3px;"></i>
<i style="left:2.20px;top:57.20px;width:7.00px;height:2.80px;background:#1d1d1d;border-radius:1px;box-shadow:inset 0 0 0 0.45px #2e2e2e"></i>
<i style="left:3.60px;top:58.30px;width:4.20px;height:0.60px;background:#6e6e6e;border-radius:0.3px;"></i>
<i style="left:10.60px;top:57.20px;width:4.40px;height:2.80px;background:#1d1d1d;border-radius:1px;box-shadow:inset 0 0 0 0.45px #2e2e2e"></i>
<i style="left:11.48px;top:58.30px;width:2.64px;height:0.60px;background:#6e6e6e;border-radius:0.3px;"></i>
<i style="left:16.60px;top:57.20px;width:5.00px;height:2.80px;background:#1d1d1d;border-radius:1px;box-shadow:inset 0 0 0 0.45px #2e2e2e"></i>
<i style="left:17.60px;top:58.30px;width:3.00px;height:0.60px;background:#6e6e6e;border-radius:0.3px;"></i>
<i style="left:22.60px;top:57.20px;width:5.00px;height:2.80px;background:#1d1d1d;border-radius:1px;box-shadow:inset 0 0 0 0.45px #2e2e2e"></i>
<i style="left:23.60px;top:58.30px;width:3.00px;height:0.60px;background:#6e6e6e;border-radius:0.3px;"></i>
<i style="left:0.00px;top:65.70px;width:23.00px;height:0.80px;background:#c9a21a;"></i>
<i style="left:2.20px;top:67.80px;width:26.00px;height:4.50px;background:#f2c92e;border-radius:1.1px;"></i>
<i style="left:10.70px;top:69.65px;width:9.00px;height:0.80px;background:#625215;border-radius:0.3px;"></i>
</div>
<span class="t" style="left:294.00px;top:196.90px;font-size:7px;color:#9b9b9b;letter-spacing:0.2px">Dark</span>
<i style="left:293.60px;top:204.90px;width:265.10px;height:12.80px;background:#4c4a4a;border-radius:1.5px;"></i>
<i style="left:297.30px;top:207.60px;width:7.80px;height:7.80px;border-radius:50%;background:#fff;"></i>
<i style="left:299.20px;top:209.40px;width:4.20px;height:4.20px;border-radius:50%;background:#111;"></i>
<i style="left:299.70px;top:210.30px;width:0.60px;height:2.40px;background:#e8e8e8;"></i>
<span class="t" style="left:308.00px;top:209.90px;font-size:3.8px;color:#dadada;font-weight:bold;letter-spacing:0.05px">Home</span>
<span class="t" style="left:293.40px;top:219.70px;font-size:7px;color:#ababab;letter-spacing:-0.2px">08. Ho<span style="display:inline-block;width:0.5px"></span><span style="display:inline-block;width:0.95px;height:0.95px;background:#8c8c8c;margin-right:0.7px"></span><span style="display:inline-block;width:0.95px;height:0.95px;background:#8c8c8c;margin-right:0.7px"></span><span style="display:inline-block;width:0.95px;height:0.95px;background:#8c8c8c;margin-right:0.7px"></span></span>
<div class="ph" style="left:293.70px;top:227.80px;width:30px;height:66.00px">
<i style="left:0.00px;top:0.00px;width:30.00px;height:34.40px;background:linear-gradient(180deg,#eec01a,#e2b214);border-radius:0 0 2.4px 2.4px"></i>
<i style="left:2.00px;top:1.00px;width:2.40px;height:1.30px;background:#6a560a;border-radius:0.3px;"></i>
<i style="left:24.20px;top:1.00px;width:4.80px;height:1.30px;background:#6a560a;border-radius:0.3px;"></i>
<i style="left:1.40px;top:5.60px;width:2.80px;height:2.80px;border-radius:50%;background:transparent;box-shadow:inset 0 0 0 0.5px #b89412"></i>
<i style="left:5.70px;top:5.60px;width:2.80px;height:2.80px;border-radius:50%;background:transparent;box-shadow:inset 0 0 0 0.5px #b89412"></i>
<i style="left:25.90px;top:5.60px;width:2.80px;height:2.80px;border-radius:50%;background:transparent;box-shadow:inset 0 0 0 0.5px #b89412"></i>
<i style="left:11.90px;top:5.40px;width:6.80px;height:6.80px;border-radius:50%;background:radial-gradient(circle at 50% 58%,#e1a48e 0 30%,#1d2236 34%);box-shadow:0 0 0 0.4px #4a3d08"></i>
<i style="left:10.60px;top:14.00px;width:9.00px;height:0.80px;background:#715e14;border-radius:0.3px;"></i>
<i style="left:5.40px;top:16.20px;width:19.60px;height:1.80px;background:#c9a312;border-radius:0.9px;"></i>
<i style="left:7.00px;top:16.75px;width:16.00px;height:0.70px;background:#56470e;border-radius:0.3px;"></i>
<i style="left:1.80px;top:20.20px;width:27.00px;height:12.60px;background:#141414;border-radius:1.6px;"></i>
<i style="left:11.30px;top:21.50px;width:8.00px;height:0.60px;background:#626262;border-radius:0.3px;"></i>
<i style="left:8.00px;top:23.55px;width:9.60px;height:1.30px;background:#bababa;border-radius:0.3px;"></i>
<i style="left:18.00px;top:23.65px;width:4.80px;height:1.10px;background:#1d814e;border-radius:0.3px;"></i>
<i style="left:4.60px;top:26.50px;width:2.80px;height:2.80px;border-radius:50%;background:#2e2608;box-shadow:inset 0 0 0 0.45px #9a7c18"></i>
<i style="left:5.55px;top:27.45px;width:0.90px;height:0.90px;background:#c9a21c;border-radius:0.2px;"></i>
<i style="left:4.40px;top:30.40px;width:3.20px;height:0.60px;background:#626262;border-radius:0.3px;"></i>
<i style="left:10.80px;top:26.50px;width:2.80px;height:2.80px;border-radius:50%;background:#2e2608;box-shadow:inset 0 0 0 0.45px #9a7c18"></i>
<i style="left:11.75px;top:27.45px;width:0.90px;height:0.90px;background:#c9a21c;border-radius:0.2px;"></i>
<i style="left:10.60px;top:30.40px;width:3.20px;height:0.60px;background:#626262;border-radius:0.3px;"></i>
<i style="left:17.00px;top:26.50px;width:2.80px;height:2.80px;border-radius:50%;background:#2e2608;box-shadow:inset 0 0 0 0.45px #9a7c18"></i>
<i style="left:17.95px;top:27.45px;width:0.90px;height:0.90px;background:#c9a21c;border-radius:0.2px;"></i>
<i style="left:16.80px;top:30.40px;width:3.20px;height:0.60px;background:#626262;border-radius:0.3px;"></i>
<i style="left:23.20px;top:26.50px;width:2.80px;height:2.80px;border-radius:50%;background:#2e2608;box-shadow:inset 0 0 0 0.45px #9a7c18"></i>
<i style="left:24.15px;top:27.45px;width:0.90px;height:0.90px;background:#c9a21c;border-radius:0.2px;"></i>
<i style="left:23.00px;top:30.40px;width:3.20px;height:0.60px;background:#626262;border-radius:0.3px;"></i>
<i style="left:0.00px;top:35.60px;width:30.00px;height:30.40px;background:#1a1a1a;"></i>
<i style="left:1.20px;top:36.40px;width:27.60px;height:24.60px;background:#1d1d1d;border-radius:1.4px;"></i>
<i style="left:1.80px;top:37.60px;width:8.20px;height:2.60px;background:#2c2c2c;border-radius:1.2px;"></i>
<i style="left:13.40px;top:38.60px;width:4.60px;height:0.60px;background:#4a4a4a;border-radius:0.3px;"></i>
<i style="left:22.40px;top:38.60px;width:3.60px;height:0.60px;background:#4a4a4a;border-radius:0.3px;"></i>
<i style="left:2.60px;top:42.00px;width:3.60px;height:3.60px;background:#4fd6a0;border-radius:0.7px;"></i>
<i style="left:7.60px;top:42.65px;width:3.80px;height:0.70px;background:#a1a1a1;border-radius:0.3px;"></i>
<i style="left:7.60px;top:44.20px;width:4.20px;height:0.60px;background:#1d814e;border-radius:0.3px;"></i>
<i style="left:14.60px;top:43.40px;width:4.20px;height:0.80px;background:#1d814e;border-radius:0.3px;"></i>
<i style="left:22.00px;top:42.60px;width:6.00px;height:0.80px;background:#acacac;border-radius:0.3px;"></i>
<i style="left:21.00px;top:44.20px;width:7.00px;height:0.60px;background:#666;border-radius:0.3px;"></i>
<i style="left:2.00px;top:46.60px;width:26.00px;height:0.30px;background:#262626;"></i>
<i style="left:2.60px;top:47.85px;width:3.60px;height:3.60px;background:#f5a030;border-radius:0.7px;"></i>
<i style="left:7.60px;top:48.50px;width:3.80px;height:0.70px;background:#a1a1a1;border-radius:0.3px;"></i>
<i style="left:7.60px;top:50.05px;width:4.20px;height:0.60px;background:#9b3232;border-radius:0.3px;"></i>
<i style="left:14.60px;top:49.25px;width:4.20px;height:0.80px;background:#9b3232;border-radius:0.3px;"></i>
<i style="left:22.00px;top:48.45px;width:6.00px;height:0.80px;background:#acacac;border-radius:0.3px;"></i>
<i style="left:21.00px;top:50.05px;width:7.00px;height:0.60px;background:#666;border-radius:0.3px;"></i>
<i style="left:2.00px;top:52.45px;width:26.00px;height:0.30px;background:#262626;"></i>
<i style="left:2.60px;top:53.70px;width:3.60px;height:3.60px;background:#8a8aff;border-radius:0.7px;"></i>
<i style="left:7.60px;top:54.35px;width:3.80px;height:0.70px;background:#a1a1a1;border-radius:0.3px;"></i>
<i style="left:7.60px;top:55.90px;width:4.20px;height:0.60px;background:#1d814e;border-radius:0.3px;"></i>
<i style="left:14.60px;top:55.10px;width:4.20px;height:0.80px;background:#1d814e;border-radius:0.3px;"></i>
<i style="left:22.00px;top:54.30px;width:6.00px;height:0.80px;background:#acacac;border-radius:0.3px;"></i>
<i style="left:21.00px;top:55.90px;width:7.00px;height:0.60px;background:#666;border-radius:0.3px;"></i>
<i style="left:0.00px;top:59.20px;width:30.00px;height:0.30px;background:#2a2a2a;"></i>
<i style="left:2.00px;top:61.40px;width:2.00px;height:2.00px;background:#d8d8d8;border-radius:0.4px;"></i>
<i style="left:7.90px;top:61.40px;width:2.00px;height:2.00px;background:#6a6a6a;border-radius:0.4px;"></i>
<i style="left:13.80px;top:61.40px;width:2.00px;height:2.00px;background:#6a6a6a;border-radius:0.4px;"></i>
<i style="left:19.70px;top:61.40px;width:2.00px;height:2.00px;background:#6a6a6a;border-radius:0.4px;"></i>
<i style="left:25.60px;top:61.40px;width:2.00px;height:2.00px;background:#6a6a6a;border-radius:0.4px;"></i>
</div>
<span class="t" style="left:332.40px;top:219.70px;font-size:7px;color:#ababab;letter-spacing:-0.2px">09. Ho<span style="display:inline-block;width:0.5px"></span><span style="display:inline-block;width:0.95px;height:0.95px;background:#8c8c8c;margin-right:0.7px"></span><span style="display:inline-block;width:0.95px;height:0.95px;background:#8c8c8c;margin-right:0.7px"></span><span style="display:inline-block;width:0.95px;height:0.95px;background:#8c8c8c;margin-right:0.7px"></span></span>
<div class="ph" style="left:332.70px;top:227.80px;width:30px;height:66.00px">
<i style="left:0.00px;top:0.00px;width:30.00px;height:26.10px;background:linear-gradient(180deg,#eec01a,#e2b214);border-radius:0 0 2.4px 2.4px"></i>
<i style="left:2.00px;top:1.00px;width:2.40px;height:1.30px;background:#6a560a;border-radius:0.3px;"></i>
<i style="left:24.20px;top:1.00px;width:4.80px;height:1.30px;background:#6a560a;border-radius:0.3px;"></i>
<i style="left:1.90px;top:5.50px;width:2.80px;height:2.80px;border-radius:50%;background:transparent;box-shadow:inset 0 0 0 0.5px #b89412"></i>
<i style="left:6.20px;top:5.50px;width:2.80px;height:2.80px;border-radius:50%;background:transparent;box-shadow:inset 0 0 0 0.5px #b89412"></i>
<i style="left:25.90px;top:5.50px;width:2.80px;height:2.80px;border-radius:50%;background:transparent;box-shadow:inset 0 0 0 0.5px #b89412"></i>
<i style="left:9.70px;top:5.00px;width:3.80px;height:3.80px;border-radius:50%;background:#1d2236;box-shadow:0 0 0 0.4px #4a3d08"></i>
<i style="left:14.80px;top:5.60px;width:9.60px;height:2.60px;background:#caa414;border-radius:1.3px;"></i>
<i style="left:15.80px;top:6.60px;width:7.60px;height:0.60px;background:#625212;border-radius:0.3px;"></i>
<i style="left:1.80px;top:11.30px;width:27.00px;height:12.60px;background:#141414;border-radius:1.6px;"></i>
<i style="left:11.30px;top:12.60px;width:8.00px;height:0.60px;background:#626262;border-radius:0.3px;"></i>
<i style="left:8.00px;top:14.65px;width:9.60px;height:1.30px;background:#bababa;border-radius:0.3px;"></i>
<i style="left:18.00px;top:14.75px;width:4.80px;height:1.10px;background:#1d814e;border-radius:0.3px;"></i>
<i style="left:4.60px;top:17.60px;width:2.80px;height:2.80px;border-radius:50%;background:#2e2608;box-shadow:inset 0 0 0 0.45px #9a7c18"></i>
<i style="left:5.55px;top:18.55px;width:0.90px;height:0.90px;background:#c9a21c;border-radius:0.2px;"></i>
<i style="left:4.40px;top:21.50px;width:3.20px;height:0.60px;background:#626262;border-radius:0.3px;"></i>
<i style="left:10.80px;top:17.60px;width:2.80px;height:2.80px;border-radius:50%;background:#2e2608;box-shadow:inset 0 0 0 0.45px #9a7c18"></i>
<i style="left:11.75px;top:18.55px;width:0.90px;height:0.90px;background:#c9a21c;border-radius:0.2px;"></i>
<i style="left:10.60px;top:21.50px;width:3.20px;height:0.60px;background:#626262;border-radius:0.3px;"></i>
<i style="left:17.00px;top:17.60px;width:2.80px;height:2.80px;border-radius:50%;background:#2e2608;box-shadow:inset 0 0 0 0.45px #9a7c18"></i>
<i style="left:17.95px;top:18.55px;width:0.90px;height:0.90px;background:#c9a21c;border-radius:0.2px;"></i>
<i style="left:16.80px;top:21.50px;width:3.20px;height:0.60px;background:#626262;border-radius:0.3px;"></i>
<i style="left:23.20px;top:17.60px;width:2.80px;height:2.80px;border-radius:50%;background:#2e2608;box-shadow:inset 0 0 0 0.45px #9a7c18"></i>
<i style="left:24.15px;top:18.55px;width:0.90px;height:0.90px;background:#c9a21c;border-radius:0.2px;"></i>
<i style="left:23.00px;top:21.50px;width:3.20px;height:0.60px;background:#626262;border-radius:0.3px;"></i>
<i style="left:0.00px;top:27.60px;width:30.00px;height:38.40px;background:#1a1a1a;"></i>
<i style="left:1.20px;top:28.20px;width:27.60px;height:32.80px;background:#1d1d1d;border-radius:1.4px;"></i>
<i style="left:1.80px;top:29.00px;width:8.20px;height:2.60px;background:#2c2c2c;border-radius:1.2px;"></i>
<i style="left:13.40px;top:30.00px;width:4.60px;height:0.60px;background:#4a4a4a;border-radius:0.3px;"></i>
<i style="left:22.40px;top:30.00px;width:3.60px;height:0.60px;background:#4a4a4a;border-radius:0.3px;"></i>
<i style="left:2.60px;top:33.60px;width:3.60px;height:3.60px;background:#4fd6a0;border-radius:0.7px;"></i>
<i style="left:7.60px;top:34.25px;width:3.80px;height:0.70px;background:#a1a1a1;border-radius:0.3px;"></i>
<i style="left:7.60px;top:35.80px;width:4.20px;height:0.60px;background:#1d814e;border-radius:0.3px;"></i>
<i style="left:14.60px;top:35.00px;width:4.20px;height:0.80px;background:#1d814e;border-radius:0.3px;"></i>
<i style="left:22.00px;top:34.20px;width:6.00px;height:0.80px;background:#acacac;border-radius:0.3px;"></i>
<i style="left:21.00px;top:35.80px;width:7.00px;height:0.60px;background:#666;border-radius:0.3px;"></i>
<i style="left:2.00px;top:38.20px;width:26.00px;height:0.30px;background:#262626;"></i>
<i style="left:2.60px;top:39.20px;width:3.60px;height:3.60px;background:#f5a030;border-radius:0.7px;"></i>
<i style="left:7.60px;top:39.85px;width:3.80px;height:0.70px;background:#a1a1a1;border-radius:0.3px;"></i>
<i style="left:7.60px;top:41.40px;width:4.20px;height:0.60px;background:#9b3232;border-radius:0.3px;"></i>
<i style="left:14.60px;top:40.60px;width:4.20px;height:0.80px;background:#9b3232;border-radius:0.3px;"></i>
<i style="left:22.00px;top:39.80px;width:6.00px;height:0.80px;background:#acacac;border-radius:0.3px;"></i>
<i style="left:21.00px;top:41.40px;width:7.00px;height:0.60px;background:#666;border-radius:0.3px;"></i>
<i style="left:2.00px;top:43.80px;width:26.00px;height:0.30px;background:#262626;"></i>
<i style="left:2.60px;top:44.80px;width:3.60px;height:3.60px;background:#8a8aff;border-radius:0.7px;"></i>
<i style="left:7.60px;top:45.45px;width:3.80px;height:0.70px;background:#a1a1a1;border-radius:0.3px;"></i>
<i style="left:7.60px;top:47.00px;width:4.20px;height:0.60px;background:#1d814e;border-radius:0.3px;"></i>
<i style="left:14.60px;top:46.20px;width:4.20px;height:0.80px;background:#1d814e;border-radius:0.3px;"></i>
<i style="left:22.00px;top:45.40px;width:6.00px;height:0.80px;background:#acacac;border-radius:0.3px;"></i>
<i style="left:21.00px;top:47.00px;width:7.00px;height:0.60px;background:#666;border-radius:0.3px;"></i>
<i style="left:2.00px;top:49.40px;width:26.00px;height:0.30px;background:#262626;"></i>
<i style="left:2.60px;top:50.40px;width:3.60px;height:3.60px;background:#b8c8ff;border-radius:0.7px;"></i>
<i style="left:7.60px;top:51.05px;width:3.80px;height:0.70px;background:#a1a1a1;border-radius:0.3px;"></i>
<i style="left:7.60px;top:52.60px;width:4.20px;height:0.60px;background:#1d814e;border-radius:0.3px;"></i>
<i style="left:14.60px;top:51.80px;width:4.20px;height:0.80px;background:#1d814e;border-radius:0.3px;"></i>
<i style="left:22.00px;top:51.00px;width:6.00px;height:0.80px;background:#acacac;border-radius:0.3px;"></i>
<i style="left:21.00px;top:52.60px;width:7.00px;height:0.60px;background:#666;border-radius:0.3px;"></i>
<i style="left:2.00px;top:55.00px;width:26.00px;height:0.30px;background:#262626;"></i>
<i style="left:2.60px;top:56.00px;width:3.60px;height:3.60px;background:#a7825e;border-radius:0.7px;"></i>
<i style="left:7.60px;top:56.65px;width:3.80px;height:0.70px;background:#a1a1a1;border-radius:0.3px;"></i>
<i style="left:7.60px;top:58.20px;width:4.20px;height:0.60px;background:#1d814e;border-radius:0.3px;"></i>
<i style="left:14.60px;top:57.40px;width:4.20px;height:0.80px;background:#1d814e;border-radius:0.3px;"></i>
<i style="left:22.00px;top:56.60px;width:6.00px;height:0.80px;background:#acacac;border-radius:0.3px;"></i>
<i style="left:21.00px;top:58.20px;width:7.00px;height:0.60px;background:#666;border-radius:0.3px;"></i>
<i style="left:0.00px;top:59.20px;width:30.00px;height:0.30px;background:#2a2a2a;"></i>
<i style="left:2.00px;top:61.40px;width:2.00px;height:2.00px;background:#d8d8d8;border-radius:0.4px;"></i>
<i style="left:7.90px;top:61.40px;width:2.00px;height:2.00px;background:#6a6a6a;border-radius:0.4px;"></i>
<i style="left:13.80px;top:61.40px;width:2.00px;height:2.00px;background:#6a6a6a;border-radius:0.4px;"></i>
<i style="left:19.70px;top:61.40px;width:2.00px;height:2.00px;background:#6a6a6a;border-radius:0.4px;"></i>
<i style="left:25.60px;top:61.40px;width:2.00px;height:2.00px;background:#6a6a6a;border-radius:0.4px;"></i>
</div>
<span class="t" style="left:371.85px;top:219.10px;font-size:7px;color:#ababab;letter-spacing:-0.2px">10. Ho<span style="display:inline-block;width:0.5px"></span><span style="display:inline-block;width:0.95px;height:0.95px;background:#8c8c8c;margin-right:0.7px"></span><span style="display:inline-block;width:0.95px;height:0.95px;background:#8c8c8c;margin-right:0.7px"></span><span style="display:inline-block;width:0.95px;height:0.95px;background:#8c8c8c;margin-right:0.7px"></span></span>
<div class="ph" style="left:372.15px;top:227.10px;width:30px;height:67.00px">
<i style="left:2.00px;top:1.00px;width:2.40px;height:1.30px;background:#6a6a6a;border-radius:0.3px;"></i>
<i style="left:24.20px;top:1.00px;width:4.80px;height:1.30px;background:#6a6a6a;border-radius:0.3px;"></i>
<i style="left:2.00px;top:6.00px;width:2.40px;height:2.40px;border-radius:50%;background:#e8e8e8;"></i>
<i style="left:9.80px;top:6.70px;width:10.20px;height:1.00px;background:#868686;border-radius:0.3px;"></i>
<i style="left:0.90px;top:10.70px;width:10.00px;height:2.80px;background:#1b1b1b;border-radius:1.3px;box-shadow:inset 0 0 0 0.5px #9c8220"></i>
<i style="left:4.20px;top:11.80px;width:3.60px;height:0.60px;background:#7a7a7a;border-radius:0.3px;"></i>
<i style="left:13.20px;top:11.80px;width:5.00px;height:0.60px;background:#555;border-radius:0.3px;"></i>
<i style="left:21.00px;top:11.80px;width:6.00px;height:0.60px;background:#555;border-radius:0.3px;"></i>
<i style="left:1.80px;top:15.30px;width:4.20px;height:0.60px;background:#6e6e6e;border-radius:0.3px;"></i>
<i style="left:1.30px;top:17.10px;width:5.60px;height:5.30px;background:#1e1e1e;border-radius:0.8px;box-shadow:inset 0 0 0 0.4px #292929"></i>
<i style="left:3.10px;top:18.30px;width:2.00px;height:1.70px;background:#b08a1e;border-radius:0.5px;"></i>
<i style="left:2.50px;top:20.75px;width:3.20px;height:0.50px;background:#777;border-radius:0.3px;"></i>
<i style="left:8.30px;top:17.10px;width:5.60px;height:5.30px;background:#1e1e1e;border-radius:0.8px;box-shadow:inset 0 0 0 0.4px #292929"></i>
<i style="left:10.10px;top:18.30px;width:2.00px;height:1.70px;background:#b08a1e;border-radius:0.5px;"></i>
<i style="left:9.50px;top:20.75px;width:3.20px;height:0.50px;background:#777;border-radius:0.3px;"></i>
<i style="left:15.30px;top:17.10px;width:5.60px;height:5.30px;background:#1e1e1e;border-radius:0.8px;box-shadow:inset 0 0 0 0.4px #292929"></i>
<i style="left:17.10px;top:18.30px;width:2.00px;height:1.70px;background:#b08a1e;border-radius:0.5px;"></i>
<i style="left:16.50px;top:20.75px;width:3.20px;height:0.50px;background:#777;border-radius:0.3px;"></i>
<i style="left:22.30px;top:17.10px;width:5.60px;height:5.30px;background:#1e1e1e;border-radius:0.8px;box-shadow:inset 0 0 0 0.4px #292929"></i>
<i style="left:24.10px;top:18.30px;width:2.00px;height:1.70px;background:#b08a1e;border-radius:0.5px;"></i>
<i style="left:23.50px;top:20.75px;width:3.20px;height:0.50px;background:#777;border-radius:0.3px;"></i>
<i style="left:1.30px;top:23.00px;width:5.60px;height:5.30px;background:#1e1e1e;border-radius:0.8px;box-shadow:inset 0 0 0 0.4px #292929"></i>
<i style="left:3.10px;top:24.20px;width:2.00px;height:1.70px;background:#b08a1e;border-radius:0.5px;"></i>
<i style="left:2.50px;top:26.65px;width:3.20px;height:0.50px;background:#777;border-radius:0.3px;"></i>
<i style="left:1.80px;top:30.30px;width:2.60px;height:0.60px;background:#6e6e6e;border-radius:0.3px;"></i>
<i style="left:1.30px;top:32.50px;width:8.90px;height:5.00px;background:#1e1e1e;border-radius:0.8px;box-shadow:inset 0 0 0 0.4px #292929"></i>
<i style="left:4.75px;top:33.70px;width:2.00px;height:1.70px;background:#b08a1e;border-radius:0.5px;"></i>
<i style="left:4.15px;top:36.15px;width:3.20px;height:0.50px;background:#777;border-radius:0.3px;"></i>
<i style="left:11.30px;top:32.50px;width:8.90px;height:5.00px;background:#1e1e1e;border-radius:0.8px;box-shadow:inset 0 0 0 0.4px #292929"></i>
<i style="left:14.75px;top:33.70px;width:2.00px;height:1.70px;background:#b08a1e;border-radius:0.5px;"></i>
<i style="left:14.15px;top:36.15px;width:3.20px;height:0.50px;background:#777;border-radius:0.3px;"></i>
<i style="left:20.90px;top:32.50px;width:8.90px;height:5.00px;background:#1e1e1e;border-radius:0.8px;box-shadow:inset 0 0 0 0.4px #292929"></i>
<i style="left:24.35px;top:33.70px;width:2.00px;height:1.70px;background:#b08a1e;border-radius:0.5px;"></i>
<i style="left:23.75px;top:36.15px;width:3.20px;height:0.50px;background:#777;border-radius:0.3px;"></i>
<i style="left:1.80px;top:39.70px;width:7.00px;height:0.60px;background:#6e6e6e;border-radius:0.3px;"></i>
<i style="left:1.30px;top:41.50px;width:8.90px;height:5.40px;background:#1e1e1e;border-radius:0.8px;box-shadow:inset 0 0 0 0.4px #292929"></i>
<i style="left:4.75px;top:42.70px;width:2.00px;height:1.70px;background:#b08a1e;border-radius:0.5px;"></i>
<i style="left:4.15px;top:45.15px;width:3.20px;height:0.50px;background:#777;border-radius:0.3px;"></i>
<i style="left:11.30px;top:41.50px;width:8.90px;height:5.40px;background:#1e1e1e;border-radius:0.8px;box-shadow:inset 0 0 0 0.4px #292929"></i>
<i style="left:14.75px;top:42.70px;width:2.00px;height:1.70px;background:#b08a1e;border-radius:0.5px;"></i>
<i style="left:14.15px;top:45.15px;width:3.20px;height:0.50px;background:#777;border-radius:0.3px;"></i>
<i style="left:20.90px;top:41.50px;width:8.90px;height:5.40px;background:#1e1e1e;border-radius:0.8px;box-shadow:inset 0 0 0 0.4px #292929"></i>
<i style="left:24.35px;top:42.70px;width:2.00px;height:1.70px;background:#b08a1e;border-radius:0.5px;"></i>
<i style="left:23.75px;top:45.15px;width:3.20px;height:0.50px;background:#777;border-radius:0.3px;"></i>
<i style="left:1.80px;top:48.90px;width:9.00px;height:0.60px;background:#6e6e6e;border-radius:0.3px;"></i>
<i style="left:1.30px;top:51.00px;width:6.60px;height:5.30px;background:#1e1e1e;border-radius:0.8px;box-shadow:inset 0 0 0 0.4px #292929"></i>
<i style="left:3.60px;top:52.20px;width:2.00px;height:1.70px;background:#b08a1e;border-radius:0.5px;"></i>
<i style="left:3.00px;top:54.65px;width:3.20px;height:0.50px;background:#777;border-radius:0.3px;"></i>
<i style="left:8.80px;top:51.00px;width:6.60px;height:5.30px;background:#1e1e1e;border-radius:0.8px;box-shadow:inset 0 0 0 0.4px #292929"></i>
<i style="left:11.10px;top:52.20px;width:2.00px;height:1.70px;background:#b08a1e;border-radius:0.5px;"></i>
<i style="left:10.50px;top:54.65px;width:3.20px;height:0.50px;background:#777;border-radius:0.3px;"></i>
</div>
<span class="t" style="left:410.40px;top:219.70px;font-size:7px;color:#ababab;letter-spacing:-0.2px">11. Ho<span style="display:inline-block;width:0.5px"></span><span style="display:inline-block;width:0.95px;height:0.95px;background:#8c8c8c;margin-right:0.7px"></span><span style="display:inline-block;width:0.95px;height:0.95px;background:#8c8c8c;margin-right:0.7px"></span><span style="display:inline-block;width:0.95px;height:0.95px;background:#8c8c8c;margin-right:0.7px"></span></span>
<div class="ph" style="left:410.70px;top:227.80px;width:30px;height:66.00px">
<i style="left:0.00px;top:0.00px;width:30.00px;height:30.00px;background:#6c5a0c;"></i>
<i style="left:2.00px;top:1.00px;width:2.40px;height:1.30px;background:#3a3008;border-radius:0.3px;"></i>
<i style="left:24.20px;top:1.00px;width:4.80px;height:1.30px;background:#3a3008;border-radius:0.3px;"></i>
<i style="left:1.40px;top:5.60px;width:2.80px;height:2.80px;border-radius:50%;background:transparent;box-shadow:inset 0 0 0 0.5px #4c4008"></i>
<i style="left:5.70px;top:5.60px;width:2.80px;height:2.80px;border-radius:50%;background:transparent;box-shadow:inset 0 0 0 0.5px #4c4008"></i>
<i style="left:25.90px;top:5.60px;width:2.80px;height:2.80px;border-radius:50%;background:transparent;box-shadow:inset 0 0 0 0.5px #4c4008"></i>
<i style="left:11.90px;top:5.40px;width:6.80px;height:6.80px;border-radius:50%;background:radial-gradient(circle at 50% 58%,#7a5a50 0 30%,#10131e 34%);"></i>
<i style="left:10.60px;top:14.00px;width:9.00px;height:0.80px;background:#41360e;border-radius:0.3px;"></i>
<i style="left:5.40px;top:16.20px;width:19.60px;height:1.80px;background:#5a4a0a;border-radius:0.9px;"></i>
<i style="left:1.80px;top:19.80px;width:27.00px;height:11.00px;background:#0b0b0b;border-radius:1.6px;"></i>
<i style="left:7.00px;top:23.40px;width:10.00px;height:1.20px;background:#555;border-radius:0.3px;"></i>
<i style="left:17.40px;top:23.50px;width:5.00px;height:1.00px;background:#1a4a32;border-radius:0.3px;"></i>
<i style="left:5.40px;top:27.40px;width:1.60px;height:1.60px;background:#3a3a3a;border-radius:0.3px;"></i>
<i style="left:14.50px;top:27.40px;width:1.60px;height:1.60px;background:#3a3a3a;border-radius:0.3px;"></i>
<i style="left:23.60px;top:27.40px;width:1.60px;height:1.60px;background:#3a3a3a;border-radius:0.3px;"></i>
<i style="left:0.00px;top:30.20px;width:30.00px;height:35.80px;background:#181818;border-radius:2.6px;"></i>
<i style="left:12.90px;top:23.20px;width:4.80px;height:4.80px;border-radius:50%;background:#f2f2f2;"></i>
<i style="left:14.60px;top:25.00px;width:1.40px;height:1.20px;background:#999;border-radius:0.3px;"></i>
<i style="left:11.80px;top:32.25px;width:7.00px;height:0.90px;background:#a1a1a1;border-radius:0.3px;"></i>
<i style="left:2.20px;top:35.30px;width:26.60px;height:4.20px;background:#1d1d1d;border-radius:0.8px;box-shadow:inset 0 0 0 0.4px #282828"></i>
<i style="left:3.40px;top:36.40px;width:2.00px;height:2.00px;background:#e6e6e6;border-radius:0.4px;"></i>
<i style="left:6.80px;top:37.10px;width:13.00px;height:0.60px;background:#6e6e6e;border-radius:0.3px;"></i>
<i style="left:2.20px;top:40.10px;width:26.60px;height:4.20px;background:#1d1d1d;border-radius:0.8px;box-shadow:inset 0 0 0 0.4px #282828"></i>
<i style="left:3.40px;top:41.20px;width:2.00px;height:2.00px;background:#8a7a1c;border-radius:0.4px;"></i>
<i style="left:6.80px;top:41.90px;width:13.00px;height:0.60px;background:#6e6e6e;border-radius:0.3px;"></i>
<i style="left:2.20px;top:44.90px;width:26.60px;height:4.20px;background:#1d1d1d;border-radius:0.8px;box-shadow:inset 0 0 0 0.4px #282828"></i>
<i style="left:3.40px;top:46.00px;width:2.00px;height:2.00px;background:#f0a030;border-radius:0.4px;"></i>
<i style="left:6.80px;top:46.70px;width:13.00px;height:0.60px;background:#6e6e6e;border-radius:0.3px;"></i>
<i style="left:2.20px;top:49.70px;width:26.60px;height:4.20px;background:#1d1d1d;border-radius:0.8px;box-shadow:inset 0 0 0 0.4px #282828"></i>
<i style="left:3.40px;top:50.80px;width:2.00px;height:2.00px;background:#8a8aff;border-radius:0.4px;"></i>
<i style="left:6.80px;top:51.50px;width:13.00px;height:0.60px;background:#6e6e6e;border-radius:0.3px;"></i>
<i style="left:2.20px;top:54.50px;width:26.60px;height:4.20px;background:#1d1d1d;border-radius:0.8px;box-shadow:inset 0 0 0 0.4px #282828"></i>
<i style="left:3.40px;top:55.60px;width:2.00px;height:2.00px;background:#cfcfcf;border-radius:0.4px;"></i>
<i style="left:6.80px;top:56.30px;width:13.00px;height:0.60px;background:#6e6e6e;border-radius:0.3px;"></i>
<i style="left:2.20px;top:60.80px;width:26.60px;height:4.10px;background:#f2c92e;border-radius:1.1px;"></i>
<i style="left:11.00px;top:62.45px;width:9.00px;height:0.80px;background:#625215;border-radius:0.3px;"></i>
</div>
<span class="t" style="left:450.10px;top:219.70px;font-size:7px;color:#ababab;letter-spacing:-0.2px">12. Ad<span style="display:inline-block;width:0.5px"></span><span style="display:inline-block;width:0.95px;height:0.95px;background:#8c8c8c;margin-right:0.7px"></span><span style="display:inline-block;width:0.95px;height:0.95px;background:#8c8c8c;margin-right:0.7px"></span><span style="display:inline-block;width:0.95px;height:0.95px;background:#8c8c8c;margin-right:0.7px"></span></span>
<div class="ph" style="left:450.40px;top:227.80px;width:30px;height:66.00px">
<i style="left:2.00px;top:1.00px;width:2.40px;height:1.30px;background:#6a6a6a;border-radius:0.3px;"></i>
<i style="left:24.20px;top:1.00px;width:4.80px;height:1.30px;background:#6a6a6a;border-radius:0.3px;"></i>
<i style="left:11.80px;top:6.90px;width:7.00px;height:1.00px;background:#929292;border-radius:0.3px;"></i>
<i style="left:25.80px;top:6.40px;width:2.00px;height:2.00px;background:transparent;border-radius:0.4px;box-shadow:inset 0 0 0 0.5px #777"></i>
<i style="left:1.35px;top:11.25px;width:13.95px;height:4.05px;background:#f2c92e;border-radius:1.0px;"></i>
<i style="left:6.30px;top:12.95px;width:4.00px;height:0.70px;background:#625215;border-radius:0.3px;"></i>
<i style="left:16.80px;top:11.25px;width:10.60px;height:4.05px;background:#1e1e1e;border-radius:1.0px;"></i>
<i style="left:18.50px;top:13.00px;width:7.00px;height:0.60px;background:#3e3e3e;border-radius:0.3px;"></i>
<i style="left:2.70px;top:17.80px;width:1.80px;height:1.80px;border-radius:50%;background:#8a8aff;"></i>
<i style="left:5.60px;top:18.40px;width:14.00px;height:0.60px;background:#626262;border-radius:0.3px;"></i>
<i style="left:25.60px;top:17.90px;width:1.60px;height:1.60px;background:transparent;border-radius:0.3px;box-shadow:inset 0 0 0 0.4px #555"></i>
<i style="left:2.00px;top:21.00px;width:26.00px;height:0.30px;background:#262626;"></i>
<i style="left:2.70px;top:22.45px;width:1.80px;height:1.80px;border-radius:50%;background:#3ba0ff;"></i>
<i style="left:5.60px;top:23.05px;width:14.00px;height:0.60px;background:#626262;border-radius:0.3px;"></i>
<i style="left:25.60px;top:22.55px;width:1.60px;height:1.60px;background:transparent;border-radius:0.3px;box-shadow:inset 0 0 0 0.4px #555"></i>
<i style="left:2.00px;top:25.65px;width:26.00px;height:0.30px;background:#262626;"></i>
<i style="left:2.70px;top:27.10px;width:1.80px;height:1.80px;border-radius:50%;background:#0a0a0a;"></i>
<i style="left:5.60px;top:27.70px;width:14.00px;height:0.60px;background:#626262;border-radius:0.3px;"></i>
<i style="left:25.60px;top:27.20px;width:1.60px;height:1.60px;background:transparent;border-radius:0.3px;box-shadow:inset 0 0 0 0.4px #555"></i>
<i style="left:2.00px;top:30.30px;width:26.00px;height:0.30px;background:#262626;"></i>
<i style="left:2.70px;top:31.75px;width:1.80px;height:1.80px;border-radius:50%;background:#2a3a6a;"></i>
<i style="left:5.60px;top:32.35px;width:14.00px;height:0.60px;background:#626262;border-radius:0.3px;"></i>
<i style="left:25.60px;top:31.85px;width:1.60px;height:1.60px;background:transparent;border-radius:0.3px;box-shadow:inset 0 0 0 0.4px #555"></i>
<i style="left:2.00px;top:34.95px;width:26.00px;height:0.30px;background:#262626;"></i>
</div>
<span class="t" style="left:488.85px;top:219.70px;font-size:7px;color:#ababab;letter-spacing:-0.2px">13. Ad<span style="display:inline-block;width:0.5px"></span><span style="display:inline-block;width:0.95px;height:0.95px;background:#8c8c8c;margin-right:0.7px"></span><span style="display:inline-block;width:0.95px;height:0.95px;background:#8c8c8c;margin-right:0.7px"></span><span style="display:inline-block;width:0.95px;height:0.95px;background:#8c8c8c;margin-right:0.7px"></span></span>
<div class="ph" style="left:489.15px;top:227.80px;width:30px;height:66.00px">
<i style="left:2.00px;top:1.00px;width:2.40px;height:1.30px;background:#6a6a6a;border-radius:0.3px;"></i>
<i style="left:24.20px;top:1.00px;width:4.80px;height:1.30px;background:#6a6a6a;border-radius:0.3px;"></i>
<i style="left:11.80px;top:6.90px;width:7.00px;height:1.00px;background:#929292;border-radius:0.3px;"></i>
<i style="left:25.80px;top:6.40px;width:2.00px;height:2.00px;background:transparent;border-radius:0.4px;box-shadow:inset 0 0 0 0.5px #777"></i>
<i style="left:2.10px;top:11.00px;width:12.30px;height:3.90px;background:#1e1e1e;border-radius:1.0px;"></i>
<i style="left:6.30px;top:12.70px;width:4.00px;height:0.60px;background:#555;border-radius:0.3px;"></i>
<i style="left:14.90px;top:11.00px;width:13.90px;height:3.90px;background:#f2c92e;border-radius:1.0px;"></i>
<i style="left:17.00px;top:12.70px;width:9.50px;height:0.60px;background:#625215;border-radius:0.3px;"></i>
<i style="left:1.90px;top:16.30px;width:26.50px;height:4.40px;background:#1b1b1b;border-radius:0.8px;box-shadow:inset 0 0 0 0.45px #2c2c2c"></i>
<i style="left:3.20px;top:18.20px;width:7.00px;height:0.60px;background:#4d4d4d;border-radius:0.3px;"></i>
<i style="left:1.90px;top:21.50px;width:26.50px;height:4.40px;background:#1b1b1b;border-radius:0.8px;box-shadow:inset 0 0 0 0.45px #2c2c2c"></i>
<i style="left:3.20px;top:23.40px;width:3.50px;height:0.60px;background:#4d4d4d;border-radius:0.3px;"></i>
<i style="left:1.90px;top:26.70px;width:26.50px;height:4.40px;background:#1b1b1b;border-radius:0.8px;box-shadow:inset 0 0 0 0.45px #2c2c2c"></i>
<i style="left:3.20px;top:28.60px;width:3.50px;height:0.60px;background:#4d4d4d;border-radius:0.3px;"></i>
<i style="left:1.90px;top:31.90px;width:26.50px;height:4.40px;background:#1b1b1b;border-radius:0.8px;box-shadow:inset 0 0 0 0.45px #2c2c2c"></i>
<i style="left:3.20px;top:33.80px;width:3.50px;height:0.60px;background:#4d4d4d;border-radius:0.3px;"></i>
<i style="left:1.90px;top:37.10px;width:26.50px;height:4.40px;background:#1b1b1b;border-radius:0.8px;box-shadow:inset 0 0 0 0.45px #2c2c2c"></i>
<i style="left:3.20px;top:39.00px;width:8.00px;height:0.60px;background:#4d4d4d;border-radius:0.3px;"></i>
<i style="left:1.90px;top:57.40px;width:26.50px;height:4.40px;background:#f2c92e;border-radius:1.1px;"></i>
<i style="left:13.15px;top:59.20px;width:4.00px;height:0.80px;background:#625215;border-radius:0.3px;"></i>
</div>
<span class="t" style="left:527.80px;top:219.70px;font-size:7px;color:#ababab;letter-spacing:-0.2px">14. Ad<span style="display:inline-block;width:0.5px"></span><span style="display:inline-block;width:0.95px;height:0.95px;background:#8c8c8c;margin-right:0.7px"></span><span style="display:inline-block;width:0.95px;height:0.95px;background:#8c8c8c;margin-right:0.7px"></span><span style="display:inline-block;width:0.95px;height:0.95px;background:#8c8c8c;margin-right:0.7px"></span></span>
<div class="ph" style="left:528.10px;top:227.80px;width:30px;height:66.00px">
<i style="left:2.00px;top:1.00px;width:2.40px;height:1.30px;background:#6a6a6a;border-radius:0.3px;"></i>
<i style="left:24.20px;top:1.00px;width:4.80px;height:1.30px;background:#6a6a6a;border-radius:0.3px;"></i>
<i style="left:11.80px;top:6.90px;width:7.00px;height:1.00px;background:#929292;border-radius:0.3px;"></i>
<i style="left:25.80px;top:6.40px;width:2.00px;height:2.00px;background:transparent;border-radius:0.4px;box-shadow:inset 0 0 0 0.5px #777"></i>
<i style="left:2.10px;top:11.00px;width:12.30px;height:3.90px;background:#1e1e1e;border-radius:1.0px;"></i>
<i style="left:6.30px;top:12.70px;width:4.00px;height:0.60px;background:#555;border-radius:0.3px;"></i>
<i style="left:14.90px;top:11.00px;width:13.90px;height:3.90px;background:#f2c92e;border-radius:1.0px;"></i>
<i style="left:17.00px;top:12.70px;width:9.50px;height:0.60px;background:#625215;border-radius:0.3px;"></i>
<i style="left:1.90px;top:16.30px;width:26.50px;height:4.40px;background:#1b1b1b;border-radius:0.8px;box-shadow:inset 0 0 0 0.45px #2c2c2c"></i>
<i style="left:3.20px;top:18.20px;width:10.00px;height:0.60px;background:#8e8e8e;border-radius:0.3px;"></i>
<i style="left:1.90px;top:21.50px;width:26.50px;height:4.40px;background:#1b1b1b;border-radius:0.8px;box-shadow:inset 0 0 0 0.45px #2c2c2c"></i>
<i style="left:3.20px;top:23.40px;width:9.00px;height:0.60px;background:#8e8e8e;border-radius:0.3px;"></i>
<i style="left:1.90px;top:26.70px;width:26.50px;height:4.40px;background:#1b1b1b;border-radius:0.8px;box-shadow:inset 0 0 0 0.45px #2c2c2c"></i>
<i style="left:3.20px;top:28.60px;width:6.50px;height:0.60px;background:#8e8e8e;border-radius:0.3px;"></i>
<i style="left:1.90px;top:31.90px;width:26.50px;height:4.40px;background:#1b1b1b;border-radius:0.8px;box-shadow:inset 0 0 0 0.45px #2c2c2c"></i>
<i style="left:3.20px;top:33.80px;width:6.50px;height:0.60px;background:#8e8e8e;border-radius:0.3px;"></i>
<i style="left:1.90px;top:37.10px;width:26.50px;height:4.40px;background:#1b1b1b;border-radius:0.8px;box-shadow:inset 0 0 0 0.45px #2c2c2c"></i>
<i style="left:3.20px;top:39.00px;width:13.00px;height:0.60px;background:#8e8e8e;border-radius:0.3px;"></i>
<i style="left:1.90px;top:57.40px;width:26.50px;height:4.40px;background:#f2c92e;border-radius:1.1px;"></i>
<i style="left:13.15px;top:59.20px;width:4.00px;height:0.80px;background:#625215;border-radius:0.3px;"></i>
</div>
<span class="t" style="left:294.00px;top:304.00px;font-size:7px;color:#9b9b9b;letter-spacing:0.2px">Dark</span>
<i style="left:293.60px;top:312.00px;width:306.40px;height:12.80px;background:#4c4a4a;border-radius:1.5px;"></i>
<i style="left:297.30px;top:314.70px;width:7.80px;height:7.80px;border-radius:50%;background:#fff;"></i>
<i style="left:299.20px;top:316.50px;width:4.20px;height:4.20px;border-radius:50%;background:#111;"></i>
<i style="left:299.70px;top:317.40px;width:0.60px;height:2.40px;background:#e8e8e8;"></i>
<span class="t" style="left:308.00px;top:317.00px;font-size:3.8px;color:#dadada;font-weight:bold;letter-spacing:0.05px">NFTs</span>
<span class="t" style="left:293.95px;top:327.10px;font-size:7px;color:#ababab;letter-spacing:-0.2px">15. NFTs</span>
<div class="ph" style="left:294.25px;top:335.20px;width:30px;height:70.00px">
<i style="left:2.00px;top:1.00px;width:2.40px;height:1.30px;background:#6a6a6a;border-radius:0.3px;"></i>
<i style="left:24.20px;top:1.00px;width:4.80px;height:1.30px;background:#6a6a6a;border-radius:0.3px;"></i>
<i style="left:2.40px;top:6.20px;width:2.00px;height:2.00px;background:#d8d8d8;border-radius:0.4px;"></i>
<i style="left:13.00px;top:6.60px;width:4.00px;height:1.00px;background:#868686;border-radius:0.3px;"></i>
<i style="left:25.60px;top:6.20px;width:2.00px;height:2.00px;background:#d8d8d8;border-radius:0.4px;"></i>
<i style="left:1.40px;top:10.35px;width:27.60px;height:3.60px;background:#232323;border-radius:1.2px;"></i>
<i style="left:2.80px;top:11.55px;width:1.20px;height:1.20px;border-radius:50%;background:#777;"></i>
<i style="left:5.00px;top:11.85px;width:5.00px;height:0.60px;background:#444;border-radius:0.3px;"></i>
<i style="left:1.80px;top:16.80px;width:6.00px;height:0.60px;background:#777;border-radius:0.3px;"></i>
<i style="left:12.00px;top:16.80px;width:4.00px;height:0.60px;background:#777;border-radius:0.3px;"></i>
<i style="left:18.80px;top:15.70px;width:10.20px;height:2.80px;background:#1a1a1a;border-radius:1.4px;box-shadow:inset 0 0 0 0.5px #8a7420"></i>
<i style="left:21.50px;top:16.80px;width:4.50px;height:0.60px;background:#aaa;border-radius:0.3px;"></i>
<i style="left:1.40px;top:20.40px;width:8.00px;height:0.80px;background:#929292;border-radius:0.3px;"></i>
<i style="left:24.80px;top:20.45px;width:4.00px;height:0.70px;background:#8c751e;border-radius:0.3px;"></i>
<i style="left:1.75px;top:22.50px;width:5.70px;height:5.40px;background:linear-gradient(160deg,#e0d8c0 0 30%,#3f7fd8 31% 70%,#e2c03a 71%);border-radius:0.8px;"></i>
<i style="left:2.05px;top:29.30px;width:5.00px;height:0.60px;background:#626262;border-radius:0.3px;"></i>
<i style="left:10.80px;top:22.50px;width:5.70px;height:5.40px;background:linear-gradient(160deg,#c873e0,#7a4ac8);border-radius:0.8px;"></i>
<i style="left:11.10px;top:29.30px;width:5.00px;height:0.60px;background:#626262;border-radius:0.3px;"></i>
<i style="left:19.30px;top:22.50px;width:5.70px;height:5.40px;background:linear-gradient(135deg,#2aa3c9,#d8c040 50%,#e0543a);border-radius:0.8px;"></i>
<i style="left:19.60px;top:29.30px;width:5.00px;height:0.60px;background:#626262;border-radius:0.3px;"></i>
<i style="left:26.80px;top:22.50px;width:5.70px;height:5.40px;background:#c83232;border-radius:0.8px;"></i>
<i style="left:27.10px;top:29.30px;width:5.00px;height:0.60px;background:#626262;border-radius:0.3px;"></i>
<i style="left:1.40px;top:33.30px;width:9.00px;height:0.80px;background:#929292;border-radius:0.3px;"></i>
<i style="left:24.80px;top:33.35px;width:4.00px;height:0.70px;background:#8c751e;border-radius:0.3px;"></i>
<i style="left:1.75px;top:36.40px;width:11.30px;height:11.70px;background:#f1c25e;border-radius:0.8px;"></i>
<i style="left:4.6px;top:38.4px;width:5.6px;height:9.7px;background:linear-gradient(#e08a30 0 35%,#8a6a48 36% 60%,#d8b070 61%);border-radius:2px 2px 0 0"></i>
<i style="left:15.30px;top:36.40px;width:11.70px;height:11.70px;background:#f0c000;border-radius:0.8px;"></i>
<i style="left:18.6px;top:38.6px;width:5.6px;height:9.5px;background:linear-gradient(#f4f4f4 0 20%,#2a2a2a 21% 60%,#555 61%);border-radius:2.5px 2.5px 0 0"></i>
<i style="left:28.75px;top:36.40px;width:3.00px;height:11.70px;background:#6a4ac0;border-radius:0.8px;"></i>
<i style="left:2.05px;top:48.90px;width:8.00px;height:0.60px;background:#7a7a7a;border-radius:0.3px;"></i>
<i style="left:2.05px;top:50.10px;width:5.00px;height:0.60px;background:#3265a2;border-radius:0.3px;"></i>
<i style="left:4.15px;top:52.00px;width:6.50px;height:0.80px;background:#8c751e;border-radius:0.3px;"></i>
<i style="left:2.05px;top:54.00px;width:1.60px;height:1.40px;background:#bbb;border-radius:0.3px;"></i>
<i style="left:10.35px;top:54.00px;width:1.60px;height:1.40px;background:#c63b3b;border-radius:0.3px;"></i>
<i style="left:15.60px;top:48.90px;width:8.00px;height:0.60px;background:#7a7a7a;border-radius:0.3px;"></i>
<i style="left:15.60px;top:50.10px;width:5.00px;height:0.60px;background:#3265a2;border-radius:0.3px;"></i>
<i style="left:17.70px;top:52.00px;width:6.50px;height:0.80px;background:#8c751e;border-radius:0.3px;"></i>
<i style="left:15.60px;top:54.00px;width:1.60px;height:1.40px;background:#bbb;border-radius:0.3px;"></i>
<i style="left:23.90px;top:54.00px;width:1.60px;height:1.40px;background:#c63b3b;border-radius:0.3px;"></i>
<i style="left:1.40px;top:58.10px;width:6.00px;height:0.80px;background:#929292;border-radius:0.3px;"></i>
<i style="left:24.80px;top:58.15px;width:4.00px;height:0.70px;background:#8c751e;border-radius:0.3px;"></i>
<i style="left:1.75px;top:61.60px;width:11.30px;height:10.00px;background:#8ed8c6;border-radius:0.8px;"></i>
<i style="left:15.30px;top:61.60px;width:11.70px;height:10.00px;background:#a8c6e6;border-radius:0.8px;"></i>
<i style="left:28.75px;top:61.60px;width:3.00px;height:10.00px;background:#e08a30;border-radius:0.8px;"></i>
</div>
<span class="t" style="left:332.95px;top:327.10px;font-size:7px;color:#ababab;letter-spacing:-0.2px">16. NF<span style="display:inline-block;width:0.5px"></span><span style="display:inline-block;width:0.95px;height:0.95px;background:#8c8c8c;margin-right:0.7px"></span><span style="display:inline-block;width:0.95px;height:0.95px;background:#8c8c8c;margin-right:0.7px"></span><span style="display:inline-block;width:0.95px;height:0.95px;background:#8c8c8c;margin-right:0.7px"></span></span>
<div class="ph" style="left:333.25px;top:335.20px;width:30px;height:70.00px">
<i style="left:2.00px;top:1.00px;width:2.40px;height:1.30px;background:#6a6a6a;border-radius:0.3px;"></i>
<i style="left:24.20px;top:1.00px;width:4.80px;height:1.30px;background:#6a6a6a;border-radius:0.3px;"></i>
<i style="left:2.40px;top:6.20px;width:2.00px;height:2.00px;background:#d8d8d8;border-radius:0.4px;"></i>
<i style="left:10.00px;top:6.60px;width:10.00px;height:1.00px;background:#868686;border-radius:0.3px;"></i>
<i style="left:25.60px;top:6.20px;width:2.00px;height:2.00px;background:#d8d8d8;border-radius:0.4px;"></i>
<i style="left:0.90px;top:10.35px;width:27.90px;height:14.00px;background:linear-gradient(180deg,#1e1a16,#2a2418 50%,#3a2e18);"></i>
<i style="left:0.90px;top:10.35px;width:27.90px;height:14.00px;background:repeating-linear-gradient(65deg,rgba(210,170,60,.07) 0 0.8px,transparent 0.8px 2.6px);"></i>
<i style="left:0.90px;top:10.35px;width:27.90px;height:14.00px;background:repeating-linear-gradient(-25deg,rgba(90,120,200,.12) 0 0.8px,transparent 0.8px 3.4px);"></i>
<i style="left:0.90px;top:19.35px;width:27.90px;height:5.00px;background:linear-gradient(90deg,rgba(200,160,40,.22),rgba(120,90,30,.05) 40%,rgba(200,160,40,.25));"></i>
<i style="left:4.00px;top:12.00px;width:1.20px;height:1.00px;background:#7a5a8a;border-radius:0.4px;"></i>
<i style="left:9.00px;top:13.50px;width:1.20px;height:1.00px;background:#c9a040;border-radius:0.4px;"></i>
<i style="left:14.00px;top:11.50px;width:1.20px;height:1.00px;background:#5a7ab0;border-radius:0.4px;"></i>
<i style="left:19.00px;top:13.00px;width:1.20px;height:1.00px;background:#b04a3a;border-radius:0.4px;"></i>
<i style="left:24.00px;top:12.20px;width:1.20px;height:1.00px;background:#c9a040;border-radius:0.4px;"></i>
<i style="left:6.00px;top:16.00px;width:1.20px;height:1.00px;background:#a08a50;border-radius:0.4px;"></i>
<i style="left:12.00px;top:17.00px;width:1.20px;height:1.00px;background:#4a6a9a;border-radius:0.4px;"></i>
<i style="left:22.00px;top:16.50px;width:1.20px;height:1.00px;background:#b89040;border-radius:0.4px;"></i>
<i style="left:26.00px;top:18.00px;width:1.20px;height:1.00px;background:#6a5a8a;border-radius:0.4px;"></i>
<i style="left:3.00px;top:20.00px;width:1.20px;height:1.00px;background:#c9a040;border-radius:0.4px;"></i>
<i style="left:10.35px;top:19.95px;width:9.60px;height:9.60px;border-radius:50%;background:#ecebe6;box-shadow:0 0 0 0.6px #cfcfcf"></i>
<i style="left:13.20px;top:21.40px;width:4.40px;height:4.40px;border-radius:50%;background:#e8c85a;"></i>
<i style="left:13.80px;top:25.20px;width:3.40px;height:3.00px;background:#d9c89a;border-radius:1.2px;"></i>
<i style="left:10.20px;top:30.90px;width:10.00px;height:1.10px;background:#aeaeae;border-radius:0.3px;"></i>
<i style="left:2.50px;top:33.90px;width:25.00px;height:0.60px;background:#565656;border-radius:0.3px;"></i>
<i style="left:2.50px;top:35.40px;width:25.00px;height:0.60px;background:#565656;border-radius:0.3px;"></i>
<i style="left:3.00px;top:36.90px;width:24.00px;height:0.60px;background:#565656;border-radius:0.3px;"></i>
<i style="left:9.00px;top:38.10px;width:12.00px;height:0.60px;background:#565656;border-radius:0.3px;"></i>
<i style="left:0.90px;top:40.45px;width:28.00px;height:7.60px;background:#1e1e1e;border-radius:0.8px;"></i>
<i style="left:3.60px;top:42.00px;width:2.00px;height:1.80px;background:#d8d8d8;border-radius:0.3px;"></i>
<i style="left:3.30px;top:44.95px;width:2.60px;height:0.70px;background:#a1a1a1;border-radius:0.3px;"></i>
<i style="left:3.00px;top:46.55px;width:3.20px;height:0.50px;background:#555;border-radius:0.3px;"></i>
<i style="left:10.50px;top:42.00px;width:2.00px;height:1.80px;background:#d8d8d8;border-radius:0.3px;"></i>
<i style="left:10.20px;top:44.95px;width:2.60px;height:0.70px;background:#a1a1a1;border-radius:0.3px;"></i>
<i style="left:9.90px;top:46.55px;width:3.20px;height:0.50px;background:#555;border-radius:0.3px;"></i>
<i style="left:17.40px;top:42.00px;width:2.00px;height:1.80px;background:#d8d8d8;border-radius:0.3px;"></i>
<i style="left:17.10px;top:44.95px;width:2.60px;height:0.70px;background:#a1a1a1;border-radius:0.3px;"></i>
<i style="left:16.80px;top:46.55px;width:3.20px;height:0.50px;background:#555;border-radius:0.3px;"></i>
<i style="left:24.30px;top:42.00px;width:2.00px;height:1.80px;background:#d8d8d8;border-radius:0.3px;"></i>
<i style="left:24.00px;top:44.95px;width:2.60px;height:0.70px;background:#a1a1a1;border-radius:0.3px;"></i>
<i style="left:23.70px;top:46.55px;width:3.20px;height:0.50px;background:#555;border-radius:0.3px;"></i>
<i style="left:4.40px;top:51.85px;width:5.00px;height:0.60px;background:#6e6e6e;border-radius:0.3px;"></i>
<i style="left:18.00px;top:51.85px;width:7.00px;height:0.60px;background:#8c751e;border-radius:0.3px;"></i>
<i style="left:0.90px;top:54.20px;width:14.00px;height:0.50px;background:#3a3a3a;"></i>
<i style="left:14.90px;top:54.00px;width:13.90px;height:0.80px;background:#d0a81c;"></i>
<i style="left:1.40px;top:56.00px;width:1.60px;height:1.60px;background:#d6ad1c;border-radius:0.3px;"></i>
<i style="left:4.00px;top:56.50px;width:13.00px;height:0.60px;background:#565656;border-radius:0.3px;"></i>
<i style="left:0.9px;top:58.6px;width:4.6px;height:12px;background:radial-gradient(ellipse at 0% 100%,#e0b030 0 40%,#8a6a18 60%,transparent 75%)"></i>
<i style="left:12.20px;top:62.40px;width:1.60px;height:1.60px;background:#d6ad1c;border-radius:0.3px;"></i>
<i style="left:14.60px;top:62.90px;width:5.00px;height:0.60px;background:#6e6e6e;border-radius:0.3px;"></i>
</div>
<span class="t" style="left:371.95px;top:327.10px;font-size:7px;color:#ababab;letter-spacing:-0.2px">17. NF<span style="display:inline-block;width:0.5px"></span><span style="display:inline-block;width:0.95px;height:0.95px;background:#8c8c8c;margin-right:0.7px"></span><span style="display:inline-block;width:0.95px;height:0.95px;background:#8c8c8c;margin-right:0.7px"></span><span style="display:inline-block;width:0.95px;height:0.95px;background:#8c8c8c;margin-right:0.7px"></span></span>
<div class="ph" style="left:372.25px;top:335.20px;width:30px;height:70.00px">
<i style="left:2.00px;top:1.00px;width:2.40px;height:1.30px;background:#6a6a6a;border-radius:0.3px;"></i>
<i style="left:24.20px;top:1.00px;width:4.80px;height:1.30px;background:#6a6a6a;border-radius:0.3px;"></i>
<i style="left:2.40px;top:6.20px;width:2.00px;height:2.00px;background:#d8d8d8;border-radius:0.4px;"></i>
<i style="left:12.50px;top:6.60px;width:5.00px;height:1.00px;background:#868686;border-radius:0.3px;"></i>
<i style="left:25.60px;top:6.20px;width:2.00px;height:2.00px;background:#d8d8d8;border-radius:0.4px;"></i>
<i style="left:0.00px;top:10.60px;width:30.00px;height:0.30px;background:#222;"></i>
<i style="left:1.60px;top:15.15px;width:8.40px;height:0.80px;background:#868686;border-radius:0.3px;"></i>
<i style="left:22.60px;top:15.25px;width:5.00px;height:0.60px;background:#7a7a7a;border-radius:0.3px;"></i>
<i style="left:0.90px;top:18.45px;width:28.20px;height:19.80px;background:#1f1f1f;border-radius:1.0px;"></i>
<i style="left:2.80px;top:20.35px;width:5.00px;height:0.80px;background:#a1a1a1;border-radius:0.3px;"></i>
<i style="left:26.00px;top:20.30px;width:1.40px;height:0.90px;background:#555;border-radius:0.3px;"></i>
<i style="left:2.25px;top:23.65px;width:2.20px;height:2.20px;border-radius:50%;background:transparent;box-shadow:inset 0 0 0 0.5px #8a7420"></i>
<i style="left:5.40px;top:24.45px;width:4.50px;height:0.60px;background:#565656;border-radius:0.3px;"></i>
<i style="left:2.25px;top:26.50px;width:2.20px;height:2.20px;border-radius:50%;background:transparent;box-shadow:inset 0 0 0 0.5px #8a7420"></i>
<i style="left:5.40px;top:27.30px;width:6.00px;height:0.60px;background:#565656;border-radius:0.3px;"></i>
<i style="left:2.25px;top:29.35px;width:2.20px;height:2.20px;border-radius:50%;background:#3a300a;box-shadow:inset 0 0 0 0.5px #c9a21c"></i>
<i style="left:2.80px;top:29.90px;width:1.10px;height:1.10px;border-radius:50%;background:#e6bc20;"></i>
<i style="left:5.40px;top:30.15px;width:2.50px;height:0.60px;background:#565656;border-radius:0.3px;"></i>
<i style="left:2.25px;top:32.20px;width:2.20px;height:2.20px;border-radius:50%;background:#3a300a;box-shadow:inset 0 0 0 0.5px #c9a21c"></i>
<i style="left:2.80px;top:32.75px;width:1.10px;height:1.10px;border-radius:50%;background:#e6bc20;"></i>
<i style="left:5.40px;top:33.00px;width:5.00px;height:0.60px;background:#565656;border-radius:0.3px;"></i>
<i style="left:2.25px;top:35.05px;width:2.20px;height:2.20px;border-radius:50%;background:transparent;box-shadow:inset 0 0 0 0.5px #8a7420"></i>
<i style="left:5.40px;top:35.85px;width:6.00px;height:0.60px;background:#565656;border-radius:0.3px;"></i>
<i style="left:0.90px;top:40.45px;width:28.20px;height:17.40px;background:#1f1f1f;border-radius:1.0px;"></i>
<i style="left:2.80px;top:41.95px;width:4.00px;height:0.80px;background:#a1a1a1;border-radius:0.3px;"></i>
<i style="left:26.00px;top:42.00px;width:1.40px;height:0.90px;background:#555;border-radius:0.3px;"></i>
<i style="left:4.75px;top:48.25px;width:1.05px;height:2.50px;background:#c8a224;"></i>
<i style="left:5.75px;top:46.25px;width:1.05px;height:4.50px;background:#c8a224;"></i>
<i style="left:6.75px;top:47.25px;width:1.05px;height:3.50px;background:#c8a224;"></i>
<i style="left:7.75px;top:48.75px;width:1.05px;height:2.00px;background:#c8a224;"></i>
<i style="left:8.75px;top:48.15px;width:1.05px;height:2.60px;background:#c8a224;"></i>
<i style="left:9.75px;top:47.55px;width:1.05px;height:3.20px;background:#c8a224;"></i>
<i style="left:10.75px;top:47.95px;width:1.05px;height:2.80px;background:#c8a224;"></i>
<i style="left:11.75px;top:46.75px;width:1.05px;height:4.00px;background:#c8a224;"></i>
<i style="left:12.75px;top:44.95px;width:1.05px;height:5.80px;background:#c8a224;"></i>
<i style="left:13.75px;top:47.35px;width:1.05px;height:3.40px;background:#c8a224;"></i>
<i style="left:14.75px;top:48.15px;width:1.05px;height:2.60px;background:#c8a224;"></i>
<i style="left:15.75px;top:46.95px;width:1.05px;height:3.80px;background:#c8a224;"></i>
<i style="left:16.75px;top:44.35px;width:1.05px;height:6.40px;background:#c8a224;"></i>
<i style="left:17.75px;top:46.55px;width:1.05px;height:4.20px;background:#c8a224;"></i>
<i style="left:18.75px;top:47.75px;width:1.05px;height:3.00px;background:#c8a224;"></i>
<i style="left:19.75px;top:45.95px;width:1.05px;height:4.80px;background:#c8a224;"></i>
<i style="left:20.75px;top:48.15px;width:1.05px;height:2.60px;background:#c8a224;"></i>
<i style="left:2.60px;top:52.60px;width:25.00px;height:0.70px;background:#444;"></i>
<i style="left:4.60px;top:52.60px;width:15.60px;height:0.70px;background:#d6ad1c;"></i>
<i style="left:4.20px;top:51.80px;width:1.40px;height:2.20px;background:#e6bc20;border-radius:0.4px;"></i>
<i style="left:19.60px;top:51.80px;width:1.40px;height:2.20px;background:#e6bc20;border-radius:0.4px;"></i>
<i style="left:2.80px;top:54.95px;width:4.40px;height:0.60px;background:#565656;border-radius:0.3px;"></i>
<i style="left:22.60px;top:54.95px;width:4.40px;height:0.60px;background:#565656;border-radius:0.3px;"></i>
<i style="left:0.90px;top:59.00px;width:28.20px;height:12.00px;background:#1f1f1f;border-radius:1.0px;"></i>
<i style="left:2.80px;top:60.30px;width:6.00px;height:0.80px;background:#a1a1a1;border-radius:0.3px;"></i>
<i style="left:26.00px;top:60.30px;width:1.40px;height:0.90px;background:#555;border-radius:0.3px;"></i>
<i style="left:2.00px;top:63.60px;width:1.40px;height:1.40px;background:#8a7420;border-radius:0.4px;"></i>
</div>
<span class="t" style="left:411.10px;top:327.10px;font-size:7px;color:#ababab;letter-spacing:-0.2px">18. NF<span style="display:inline-block;width:0.5px"></span><span style="display:inline-block;width:0.95px;height:0.95px;background:#8c8c8c;margin-right:0.7px"></span><span style="display:inline-block;width:0.95px;height:0.95px;background:#8c8c8c;margin-right:0.7px"></span><span style="display:inline-block;width:0.95px;height:0.95px;background:#8c8c8c;margin-right:0.7px"></span></span>
<div class="ph" style="left:411.40px;top:335.20px;width:30px;height:70.00px">
<i style="left:2.00px;top:1.00px;width:2.40px;height:1.30px;background:#6a6a6a;border-radius:0.3px;"></i>
<i style="left:24.20px;top:1.00px;width:4.80px;height:1.30px;background:#6a6a6a;border-radius:0.3px;"></i>
<i style="left:2.40px;top:6.20px;width:2.00px;height:2.00px;background:#d8d8d8;border-radius:0.4px;"></i>
<i style="left:9.50px;top:6.60px;width:11.00px;height:1.00px;background:#868686;border-radius:0.3px;"></i>
<i style="left:25.60px;top:6.20px;width:2.00px;height:2.00px;background:#d8d8d8;border-radius:0.4px;"></i>
<i style="left:1.10px;top:10.35px;width:27.50px;height:27.85px;background:#f29c2a;border-radius:1.0px;"></i>
<i style="left:8.66px;top:19.54px;width:3.85px;height:5.29px;background:#d9c4a0;border-radius:50%;box-shadow:0 0 0 0.4px #3a3020"></i>
<i style="left:18.70px;top:19.54px;width:3.85px;height:5.29px;background:#d9c4a0;border-radius:50%;box-shadow:0 0 0 0.4px #3a3020"></i>
<i style="left:12.10px;top:19.54px;width:6.88px;height:11.70px;background:linear-gradient(90deg,#bdbdbd,#ecebe8 40%,#c8c4bc);border-radius:45% 45% 30% 30%;box-shadow:0 0 0 0.4px #2a2a2a"></i>
<i style="left:10.45px;top:15.08px;width:9.90px;height:4.73px;background:linear-gradient(180deg,#7a7a7a,#5e5e5e);border-radius:1.2px 1.2px 0 0;box-shadow:0 0 0 0.4px #2a2a2a"></i>
<i style="left:8.66px;top:19.54px;width:12.65px;height:1.25px;background:#5a5a5a;border-radius:1px;"></i>
<i style="left:13.75px;top:21.21px;width:1.93px;height:1.95px;background:#151515;border-radius:50%;"></i>
<i style="left:16.23px;top:21.49px;width:2.20px;height:1.39px;background:#6a6a6a;border-radius:50%;"></i>
<i style="left:13.20px;top:25.39px;width:4.40px;height:4.46px;background:#d0ccc4;border-radius:30%;"></i>
<i style="left:12.65px;top:30.40px;width:3.85px;height:3.90px;background:linear-gradient(90deg,#9a9a9a,#dcdcdc);border-radius:0;"></i>
<i style="left:6.88px;top:33.74px;width:13.20px;height:4.46px;background:linear-gradient(90deg,#cfcfcf,#6a6a6a 30%,#e8e8e8 55%,#555 80%,#cfcfcf);border-radius:2.5px 2.5px 0 0;"></i>
<i style="left:8.53px;top:34.86px;width:6.05px;height:1.39px;background:#a8302a;border-radius:1px;"></i>
<i style="left:9.60px;top:40.60px;width:11.00px;height:1.10px;background:#aeaeae;border-radius:0.3px;"></i>
<i style="left:8.40px;top:42.60px;width:1.50px;height:1.50px;background:#cfcfcf;border-radius:0.4px;"></i>
<i style="left:10.60px;top:43.05px;width:10.00px;height:0.60px;background:#565656;border-radius:0.3px;"></i>
<i style="left:0.90px;top:45.00px;width:28.20px;height:10.20px;background:#1e1e1e;border-radius:0.8px;"></i>
<i style="left:4.30px;top:46.80px;width:1.80px;height:1.80px;background:#d8d8d8;border-radius:0.3px;"></i>
<i style="left:3.90px;top:50.00px;width:2.60px;height:0.70px;background:#a1a1a1;border-radius:0.3px;"></i>
<i style="left:3.40px;top:51.55px;width:3.60px;height:0.50px;background:#555;border-radius:0.3px;"></i>
<i style="left:10.80px;top:46.80px;width:1.80px;height:1.80px;background:#d8d8d8;border-radius:0.3px;"></i>
<i style="left:10.40px;top:50.00px;width:2.60px;height:0.70px;background:#a1a1a1;border-radius:0.3px;"></i>
<i style="left:9.90px;top:51.55px;width:3.60px;height:0.50px;background:#555;border-radius:0.3px;"></i>
<i style="left:17.30px;top:46.80px;width:1.80px;height:1.80px;background:#d8d8d8;border-radius:0.3px;"></i>
<i style="left:16.90px;top:50.00px;width:2.60px;height:0.70px;background:#a1a1a1;border-radius:0.3px;"></i>
<i style="left:16.40px;top:51.55px;width:3.60px;height:0.50px;background:#555;border-radius:0.3px;"></i>
<i style="left:23.80px;top:46.80px;width:1.80px;height:1.80px;background:#d8d8d8;border-radius:0.3px;"></i>
<i style="left:23.40px;top:50.00px;width:2.60px;height:0.70px;background:#a1a1a1;border-radius:0.3px;"></i>
<i style="left:22.90px;top:51.55px;width:3.60px;height:0.50px;background:#555;border-radius:0.3px;"></i>
<i style="left:1.60px;top:55.45px;width:5.50px;height:0.60px;background:#565656;border-radius:0.3px;"></i>
<i style="left:15.60px;top:55.45px;width:5.00px;height:0.60px;background:#565656;border-radius:0.3px;"></i>
<i style="left:2.10px;top:56.90px;width:2.20px;height:2.20px;border-radius:50%;background:#7aa0c8;"></i>
<i style="left:5.20px;top:57.70px;width:6.00px;height:0.60px;background:#929292;border-radius:0.3px;"></i>
<i style="left:15.70px;top:56.90px;width:2.20px;height:2.20px;border-radius:50%;background:#e0543a;"></i>
<i style="left:18.80px;top:57.70px;width:8.00px;height:0.60px;background:#929292;border-radius:0.3px;"></i>
<i style="left:1.20px;top:61.60px;width:8.20px;height:2.80px;background:#1a1a1a;border-radius:1.2px;box-shadow:inset 0 0 0 0.45px #8a7420"></i>
<i style="left:10.40px;top:61.60px;width:7.40px;height:2.80px;background:#1a1a1a;border-radius:1.2px;box-shadow:inset 0 0 0 0.45px #3a3a3a"></i>
<i style="left:19.20px;top:61.60px;width:9.00px;height:2.80px;background:#1a1a1a;border-radius:1.2px;box-shadow:inset 0 0 0 0.45px #3a3a3a"></i>
</div>
<span class="t" style="left:450.30px;top:327.10px;font-size:7px;color:#ababab;letter-spacing:-0.2px">19. NF<span style="display:inline-block;width:0.5px"></span><span style="display:inline-block;width:0.95px;height:0.95px;background:#8c8c8c;margin-right:0.7px"></span><span style="display:inline-block;width:0.95px;height:0.95px;background:#8c8c8c;margin-right:0.7px"></span><span style="display:inline-block;width:0.95px;height:0.95px;background:#8c8c8c;margin-right:0.7px"></span></span>
<div class="ph" style="left:450.60px;top:335.20px;width:30px;height:70.00px">
<i style="left:2.00px;top:1.00px;width:2.40px;height:1.30px;background:#6a6a6a;border-radius:0.3px;"></i>
<i style="left:24.20px;top:1.00px;width:4.80px;height:1.30px;background:#6a6a6a;border-radius:0.3px;"></i>
<i style="left:2.40px;top:6.20px;width:2.00px;height:2.00px;background:#d8d8d8;border-radius:0.4px;"></i>
<i style="left:9.50px;top:6.60px;width:11.00px;height:1.00px;background:#868686;border-radius:0.3px;"></i>
<i style="left:25.60px;top:6.20px;width:2.00px;height:2.00px;background:#d8d8d8;border-radius:0.4px;"></i>
<i style="left:1.10px;top:10.35px;width:27.50px;height:27.85px;background:#f29c2a;border-radius:1.0px;"></i>
<i style="left:8.66px;top:19.54px;width:3.85px;height:5.29px;background:#d9c4a0;border-radius:50%;box-shadow:0 0 0 0.4px #3a3020"></i>
<i style="left:18.70px;top:19.54px;width:3.85px;height:5.29px;background:#d9c4a0;border-radius:50%;box-shadow:0 0 0 0.4px #3a3020"></i>
<i style="left:12.10px;top:19.54px;width:6.88px;height:11.70px;background:linear-gradient(90deg,#bdbdbd,#ecebe8 40%,#c8c4bc);border-radius:45% 45% 30% 30%;box-shadow:0 0 0 0.4px #2a2a2a"></i>
<i style="left:10.45px;top:15.08px;width:9.90px;height:4.73px;background:linear-gradient(180deg,#7a7a7a,#5e5e5e);border-radius:1.2px 1.2px 0 0;box-shadow:0 0 0 0.4px #2a2a2a"></i>
<i style="left:8.66px;top:19.54px;width:12.65px;height:1.25px;background:#5a5a5a;border-radius:1px;"></i>
<i style="left:13.75px;top:21.21px;width:1.93px;height:1.95px;background:#151515;border-radius:50%;"></i>
<i style="left:16.23px;top:21.49px;width:2.20px;height:1.39px;background:#6a6a6a;border-radius:50%;"></i>
<i style="left:13.20px;top:25.39px;width:4.40px;height:4.46px;background:#d0ccc4;border-radius:30%;"></i>
<i style="left:12.65px;top:30.40px;width:3.85px;height:3.90px;background:linear-gradient(90deg,#9a9a9a,#dcdcdc);border-radius:0;"></i>
<i style="left:6.88px;top:33.74px;width:13.20px;height:4.46px;background:linear-gradient(90deg,#cfcfcf,#6a6a6a 30%,#e8e8e8 55%,#555 80%,#cfcfcf);border-radius:2.5px 2.5px 0 0;"></i>
<i style="left:8.53px;top:34.86px;width:6.05px;height:1.39px;background:#a8302a;border-radius:1px;"></i>
<i style="left:9.60px;top:40.60px;width:11.00px;height:1.10px;background:#aeaeae;border-radius:0.3px;"></i>
<i style="left:8.40px;top:42.60px;width:1.50px;height:1.50px;background:#cfcfcf;border-radius:0.4px;"></i>
<i style="left:10.60px;top:43.05px;width:10.00px;height:0.60px;background:#565656;border-radius:0.3px;"></i>
<i style="left:0.90px;top:45.00px;width:28.20px;height:10.20px;background:#1e1e1e;border-radius:0.8px;"></i>
<i style="left:4.30px;top:46.80px;width:1.80px;height:1.80px;background:#d8d8d8;border-radius:0.3px;"></i>
<i style="left:3.90px;top:50.00px;width:2.60px;height:0.70px;background:#a1a1a1;border-radius:0.3px;"></i>
<i style="left:3.40px;top:51.55px;width:3.60px;height:0.50px;background:#555;border-radius:0.3px;"></i>
<i style="left:10.80px;top:46.80px;width:1.80px;height:1.80px;background:#d8d8d8;border-radius:0.3px;"></i>
<i style="left:10.40px;top:50.00px;width:2.60px;height:0.70px;background:#a1a1a1;border-radius:0.3px;"></i>
<i style="left:9.90px;top:51.55px;width:3.60px;height:0.50px;background:#555;border-radius:0.3px;"></i>
<i style="left:17.30px;top:46.80px;width:1.80px;height:1.80px;background:#d8d8d8;border-radius:0.3px;"></i>
<i style="left:16.90px;top:50.00px;width:2.60px;height:0.70px;background:#a1a1a1;border-radius:0.3px;"></i>
<i style="left:16.40px;top:51.55px;width:3.60px;height:0.50px;background:#555;border-radius:0.3px;"></i>
<i style="left:23.80px;top:46.80px;width:1.80px;height:1.80px;background:#d8d8d8;border-radius:0.3px;"></i>
<i style="left:23.40px;top:50.00px;width:2.60px;height:0.70px;background:#a1a1a1;border-radius:0.3px;"></i>
<i style="left:22.90px;top:51.55px;width:3.60px;height:0.50px;background:#555;border-radius:0.3px;"></i>
<i style="left:1.60px;top:55.45px;width:5.50px;height:0.60px;background:#565656;border-radius:0.3px;"></i>
<i style="left:15.60px;top:55.45px;width:5.00px;height:0.60px;background:#565656;border-radius:0.3px;"></i>
<i style="left:2.10px;top:56.90px;width:2.20px;height:2.20px;border-radius:50%;background:#7aa0c8;"></i>
<i style="left:5.20px;top:57.70px;width:6.00px;height:0.60px;background:#929292;border-radius:0.3px;"></i>
<i style="left:15.70px;top:56.90px;width:2.20px;height:2.20px;border-radius:50%;background:#e0543a;"></i>
<i style="left:18.80px;top:57.70px;width:8.00px;height:0.60px;background:#929292;border-radius:0.3px;"></i>
<i style="left:1.20px;top:61.60px;width:8.20px;height:2.80px;background:#1a1a1a;border-radius:1.2px;box-shadow:inset 0 0 0 0.45px #8a7420"></i>
<i style="left:10.40px;top:61.60px;width:7.40px;height:2.80px;background:#1a1a1a;border-radius:1.2px;box-shadow:inset 0 0 0 0.45px #3a3a3a"></i>
<i style="left:19.20px;top:61.60px;width:9.00px;height:2.80px;background:#1a1a1a;border-radius:1.2px;box-shadow:inset 0 0 0 0.45px #3a3a3a"></i>
</div>
<span class="t" style="left:489.30px;top:327.10px;font-size:7px;color:#ababab;letter-spacing:-0.2px">20. NF<span style="display:inline-block;width:0.5px"></span><span style="display:inline-block;width:0.95px;height:0.95px;background:#8c8c8c;margin-right:0.7px"></span><span style="display:inline-block;width:0.95px;height:0.95px;background:#8c8c8c;margin-right:0.7px"></span><span style="display:inline-block;width:0.95px;height:0.95px;background:#8c8c8c;margin-right:0.7px"></span></span>
<div class="ph" style="left:489.60px;top:335.20px;width:30px;height:70.00px">
<i style="left:2.00px;top:1.00px;width:2.40px;height:1.30px;background:#6a6a6a;border-radius:0.3px;"></i>
<i style="left:24.20px;top:1.00px;width:4.80px;height:1.30px;background:#6a6a6a;border-radius:0.3px;"></i>
<i style="left:2.40px;top:6.20px;width:2.00px;height:2.00px;background:#d8d8d8;border-radius:0.4px;"></i>
<i style="left:9.50px;top:6.60px;width:11.00px;height:1.00px;background:#868686;border-radius:0.3px;"></i>
<i style="left:25.60px;top:6.20px;width:2.00px;height:2.00px;background:#d8d8d8;border-radius:0.4px;"></i>
<i style="left:1.10px;top:10.35px;width:27.50px;height:27.85px;background:#f29c2a;border-radius:1.0px;"></i>
<i style="left:8.66px;top:19.54px;width:3.85px;height:5.29px;background:#d9c4a0;border-radius:50%;box-shadow:0 0 0 0.4px #3a3020"></i>
<i style="left:18.70px;top:19.54px;width:3.85px;height:5.29px;background:#d9c4a0;border-radius:50%;box-shadow:0 0 0 0.4px #3a3020"></i>
<i style="left:12.10px;top:19.54px;width:6.88px;height:11.70px;background:linear-gradient(90deg,#bdbdbd,#ecebe8 40%,#c8c4bc);border-radius:45% 45% 30% 30%;box-shadow:0 0 0 0.4px #2a2a2a"></i>
<i style="left:10.45px;top:15.08px;width:9.90px;height:4.73px;background:linear-gradient(180deg,#7a7a7a,#5e5e5e);border-radius:1.2px 1.2px 0 0;box-shadow:0 0 0 0.4px #2a2a2a"></i>
<i style="left:8.66px;top:19.54px;width:12.65px;height:1.25px;background:#5a5a5a;border-radius:1px;"></i>
<i style="left:13.75px;top:21.21px;width:1.93px;height:1.95px;background:#151515;border-radius:50%;"></i>
<i style="left:16.23px;top:21.49px;width:2.20px;height:1.39px;background:#6a6a6a;border-radius:50%;"></i>
<i style="left:13.20px;top:25.39px;width:4.40px;height:4.46px;background:#d0ccc4;border-radius:30%;"></i>
<i style="left:12.65px;top:30.40px;width:3.85px;height:3.90px;background:linear-gradient(90deg,#9a9a9a,#dcdcdc);border-radius:0;"></i>
<i style="left:6.88px;top:33.74px;width:13.20px;height:4.46px;background:linear-gradient(90deg,#cfcfcf,#6a6a6a 30%,#e8e8e8 55%,#555 80%,#cfcfcf);border-radius:2.5px 2.5px 0 0;"></i>
<i style="left:8.53px;top:34.86px;width:6.05px;height:1.39px;background:#a8302a;border-radius:1px;"></i>
<i style="left:9.60px;top:40.60px;width:11.00px;height:1.10px;background:#aeaeae;border-radius:0.3px;"></i>
<i style="left:8.40px;top:42.60px;width:1.50px;height:1.50px;background:#cfcfcf;border-radius:0.4px;"></i>
<i style="left:10.60px;top:43.05px;width:10.00px;height:0.60px;background:#565656;border-radius:0.3px;"></i>
<i style="left:0.90px;top:45.00px;width:28.20px;height:10.20px;background:#1e1e1e;border-radius:0.8px;"></i>
<i style="left:4.30px;top:46.80px;width:1.80px;height:1.80px;background:#d8d8d8;border-radius:0.3px;"></i>
<i style="left:3.90px;top:50.00px;width:2.60px;height:0.70px;background:#a1a1a1;border-radius:0.3px;"></i>
<i style="left:3.40px;top:51.55px;width:3.60px;height:0.50px;background:#555;border-radius:0.3px;"></i>
<i style="left:10.80px;top:46.80px;width:1.80px;height:1.80px;background:#d8d8d8;border-radius:0.3px;"></i>
<i style="left:10.40px;top:50.00px;width:2.60px;height:0.70px;background:#a1a1a1;border-radius:0.3px;"></i>
<i style="left:9.90px;top:51.55px;width:3.60px;height:0.50px;background:#555;border-radius:0.3px;"></i>
<i style="left:17.30px;top:46.80px;width:1.80px;height:1.80px;background:#d8d8d8;border-radius:0.3px;"></i>
<i style="left:16.90px;top:50.00px;width:2.60px;height:0.70px;background:#a1a1a1;border-radius:0.3px;"></i>
<i style="left:16.40px;top:51.55px;width:3.60px;height:0.50px;background:#555;border-radius:0.3px;"></i>
<i style="left:23.80px;top:46.80px;width:1.80px;height:1.80px;background:#d8d8d8;border-radius:0.3px;"></i>
<i style="left:23.40px;top:50.00px;width:2.60px;height:0.70px;background:#a1a1a1;border-radius:0.3px;"></i>
<i style="left:22.90px;top:51.55px;width:3.60px;height:0.50px;background:#555;border-radius:0.3px;"></i>
<i style="left:1.60px;top:55.45px;width:5.50px;height:0.60px;background:#565656;border-radius:0.3px;"></i>
<i style="left:15.60px;top:55.45px;width:5.00px;height:0.60px;background:#565656;border-radius:0.3px;"></i>
<i style="left:2.10px;top:56.90px;width:2.20px;height:2.20px;border-radius:50%;background:#7aa0c8;"></i>
<i style="left:5.20px;top:57.70px;width:6.00px;height:0.60px;background:#929292;border-radius:0.3px;"></i>
<i style="left:15.70px;top:56.90px;width:2.20px;height:2.20px;border-radius:50%;background:#e0543a;"></i>
<i style="left:18.80px;top:57.70px;width:8.00px;height:0.60px;background:#929292;border-radius:0.3px;"></i>
<i style="left:1.20px;top:61.60px;width:8.20px;height:2.80px;background:#1a1a1a;border-radius:1.2px;box-shadow:inset 0 0 0 0.45px #8a7420"></i>
<i style="left:10.40px;top:61.60px;width:7.40px;height:2.80px;background:#1a1a1a;border-radius:1.2px;box-shadow:inset 0 0 0 0.45px #3a3a3a"></i>
<i style="left:19.20px;top:61.60px;width:9.00px;height:2.80px;background:#1a1a1a;border-radius:1.2px;box-shadow:inset 0 0 0 0.45px #3a3a3a"></i>
</div>
<span class="t" style="left:528.30px;top:327.10px;font-size:7px;color:#ababab;letter-spacing:-0.2px">21. NF<span style="display:inline-block;width:0.5px"></span><span style="display:inline-block;width:0.95px;height:0.95px;background:#8c8c8c;margin-right:0.7px"></span><span style="display:inline-block;width:0.95px;height:0.95px;background:#8c8c8c;margin-right:0.7px"></span><span style="display:inline-block;width:0.95px;height:0.95px;background:#8c8c8c;margin-right:0.7px"></span></span>
<div class="ph" style="left:528.60px;top:335.20px;width:30px;height:70.00px">
<i style="left:2.00px;top:1.00px;width:2.40px;height:1.30px;background:#6a6a6a;border-radius:0.3px;"></i>
<i style="left:24.20px;top:1.00px;width:4.80px;height:1.30px;background:#6a6a6a;border-radius:0.3px;"></i>
<i style="left:2.40px;top:6.20px;width:2.00px;height:2.00px;background:#d8d8d8;border-radius:0.4px;"></i>
<i style="left:9.50px;top:6.60px;width:11.00px;height:1.00px;background:#868686;border-radius:0.3px;"></i>
<i style="left:25.60px;top:6.20px;width:2.00px;height:2.00px;background:#d8d8d8;border-radius:0.4px;"></i>
<i style="left:1.10px;top:10.35px;width:27.50px;height:27.85px;background:#f29c2a;border-radius:1.0px;"></i>
<i style="left:8.66px;top:19.54px;width:3.85px;height:5.29px;background:#d9c4a0;border-radius:50%;box-shadow:0 0 0 0.4px #3a3020"></i>
<i style="left:18.70px;top:19.54px;width:3.85px;height:5.29px;background:#d9c4a0;border-radius:50%;box-shadow:0 0 0 0.4px #3a3020"></i>
<i style="left:12.10px;top:19.54px;width:6.88px;height:11.70px;background:linear-gradient(90deg,#bdbdbd,#ecebe8 40%,#c8c4bc);border-radius:45% 45% 30% 30%;box-shadow:0 0 0 0.4px #2a2a2a"></i>
<i style="left:10.45px;top:15.08px;width:9.90px;height:4.73px;background:linear-gradient(180deg,#7a7a7a,#5e5e5e);border-radius:1.2px 1.2px 0 0;box-shadow:0 0 0 0.4px #2a2a2a"></i>
<i style="left:8.66px;top:19.54px;width:12.65px;height:1.25px;background:#5a5a5a;border-radius:1px;"></i>
<i style="left:13.75px;top:21.21px;width:1.93px;height:1.95px;background:#151515;border-radius:50%;"></i>
<i style="left:16.23px;top:21.49px;width:2.20px;height:1.39px;background:#6a6a6a;border-radius:50%;"></i>
<i style="left:13.20px;top:25.39px;width:4.40px;height:4.46px;background:#d0ccc4;border-radius:30%;"></i>
<i style="left:12.65px;top:30.40px;width:3.85px;height:3.90px;background:linear-gradient(90deg,#9a9a9a,#dcdcdc);border-radius:0;"></i>
<i style="left:6.88px;top:33.74px;width:13.20px;height:4.46px;background:linear-gradient(90deg,#cfcfcf,#6a6a6a 30%,#e8e8e8 55%,#555 80%,#cfcfcf);border-radius:2.5px 2.5px 0 0;"></i>
<i style="left:8.53px;top:34.86px;width:6.05px;height:1.39px;background:#a8302a;border-radius:1px;"></i>
<i style="left:9.60px;top:40.60px;width:11.00px;height:1.10px;background:#aeaeae;border-radius:0.3px;"></i>
<i style="left:8.40px;top:42.60px;width:1.50px;height:1.50px;background:#cfcfcf;border-radius:0.4px;"></i>
<i style="left:10.60px;top:43.05px;width:10.00px;height:0.60px;background:#565656;border-radius:0.3px;"></i>
<i style="left:0.90px;top:45.00px;width:28.20px;height:10.20px;background:#1e1e1e;border-radius:0.8px;"></i>
<i style="left:4.30px;top:46.80px;width:1.80px;height:1.80px;background:#d8d8d8;border-radius:0.3px;"></i>
<i style="left:3.90px;top:50.00px;width:2.60px;height:0.70px;background:#a1a1a1;border-radius:0.3px;"></i>
<i style="left:3.40px;top:51.55px;width:3.60px;height:0.50px;background:#555;border-radius:0.3px;"></i>
<i style="left:10.80px;top:46.80px;width:1.80px;height:1.80px;background:#d8d8d8;border-radius:0.3px;"></i>
<i style="left:10.40px;top:50.00px;width:2.60px;height:0.70px;background:#a1a1a1;border-radius:0.3px;"></i>
<i style="left:9.90px;top:51.55px;width:3.60px;height:0.50px;background:#555;border-radius:0.3px;"></i>
<i style="left:17.30px;top:46.80px;width:1.80px;height:1.80px;background:#d8d8d8;border-radius:0.3px;"></i>
<i style="left:16.90px;top:50.00px;width:2.60px;height:0.70px;background:#a1a1a1;border-radius:0.3px;"></i>
<i style="left:16.40px;top:51.55px;width:3.60px;height:0.50px;background:#555;border-radius:0.3px;"></i>
<i style="left:23.80px;top:46.80px;width:1.80px;height:1.80px;background:#d8d8d8;border-radius:0.3px;"></i>
<i style="left:23.40px;top:50.00px;width:2.60px;height:0.70px;background:#a1a1a1;border-radius:0.3px;"></i>
<i style="left:22.90px;top:51.55px;width:3.60px;height:0.50px;background:#555;border-radius:0.3px;"></i>
<i style="left:1.60px;top:55.45px;width:5.50px;height:0.60px;background:#565656;border-radius:0.3px;"></i>
<i style="left:15.60px;top:55.45px;width:5.00px;height:0.60px;background:#565656;border-radius:0.3px;"></i>
<i style="left:2.10px;top:56.90px;width:2.20px;height:2.20px;border-radius:50%;background:#7aa0c8;"></i>
<i style="left:5.20px;top:57.70px;width:6.00px;height:0.60px;background:#929292;border-radius:0.3px;"></i>
<i style="left:15.70px;top:56.90px;width:2.20px;height:2.20px;border-radius:50%;background:#e0543a;"></i>
<i style="left:18.80px;top:57.70px;width:8.00px;height:0.60px;background:#929292;border-radius:0.3px;"></i>
<i style="left:1.20px;top:61.60px;width:8.20px;height:2.80px;background:#1a1a1a;border-radius:1.2px;box-shadow:inset 0 0 0 0.45px #8a7420"></i>
<i style="left:10.40px;top:61.60px;width:7.40px;height:2.80px;background:#1a1a1a;border-radius:1.2px;box-shadow:inset 0 0 0 0.45px #3a3a3a"></i>
<i style="left:19.20px;top:61.60px;width:9.00px;height:2.80px;background:#1a1a1a;border-radius:1.2px;box-shadow:inset 0 0 0 0.45px #3a3a3a"></i>
</div>
<span class="t" style="left:567.10px;top:327.10px;font-size:7px;color:#ababab;letter-spacing:-0.2px">22. Ma<span style="display:inline-block;width:0.5px"></span><span style="display:inline-block;width:0.95px;height:0.95px;background:#8c8c8c;margin-right:0.7px"></span><span style="display:inline-block;width:0.95px;height:0.95px;background:#8c8c8c;margin-right:0.7px"></span><span style="display:inline-block;width:0.95px;height:0.95px;background:#8c8c8c;margin-right:0.7px"></span></span>
<div class="ph" style="left:567.40px;top:335.20px;width:30px;height:70.00px">
<i style="left:2.00px;top:1.00px;width:2.40px;height:1.30px;background:#6a6a6a;border-radius:0.3px;"></i>
<i style="left:24.20px;top:1.00px;width:4.80px;height:1.30px;background:#6a6a6a;border-radius:0.3px;"></i>
<i style="left:2.20px;top:6.00px;width:2.20px;height:2.20px;border-radius:50%;background:#e0e0e0;"></i>
<i style="left:9.60px;top:6.60px;width:10.00px;height:1.00px;background:#868686;border-radius:0.3px;"></i>
<i style="left:1.60px;top:11.05px;width:27.00px;height:3.35px;background:#1e1e1e;border-radius:0.8px;box-shadow:inset 0 0 0 0.4px #2a2a2a"></i>
<i style="left:2.60px;top:11.80px;width:1.60px;height:1.80px;background:#cfcfcf;border-radius:0.3px;"></i>
<i style="left:4.60px;top:12.40px;width:2.00px;height:0.60px;background:#aaa;border-radius:0.3px;"></i>
<i style="left:25.80px;top:12.40px;width:1.20px;height:0.60px;background:#666;border-radius:0.3px;"></i>
<i style="left:1.60px;top:16.20px;width:13.60px;height:3.15px;background:#1e1e1e;border-radius:0.8px;box-shadow:inset 0 0 0 0.4px #2a2a2a"></i>
<i style="left:2.60px;top:17.50px;width:5.00px;height:0.60px;background:#4a4a4a;border-radius:0.3px;"></i>
<i style="left:15.20px;top:16.20px;width:13.40px;height:3.15px;background:#1e1e1e;border-radius:0.8px;box-shadow:inset 0 0 0 0.4px #2a2a2a"></i>
<i style="left:17.40px;top:17.50px;width:10.00px;height:0.60px;background:#6e6e6e;border-radius:0.3px;"></i>
<i style="left:2.60px;top:21.05px;width:24.50px;height:0.60px;background:#555;border-radius:0.3px;"></i>
<i style="left:1.60px;top:23.40px;width:27.00px;height:3.15px;background:#1e1e1e;border-radius:0.8px;box-shadow:inset 0 0 0 0.4px #2a2a2a"></i>
<i style="left:2.60px;top:24.70px;width:4.00px;height:0.60px;background:#7a7a7a;border-radius:0.3px;"></i>
<i style="left:25.60px;top:24.70px;width:1.60px;height:0.60px;background:#666;border-radius:0.3px;"></i>
<i style="left:1.60px;top:28.35px;width:27.00px;height:3.60px;background:#1e1e1e;border-radius:0.8px;box-shadow:inset 0 0 0 0.4px #2a2a2a"></i>
<i style="left:2.60px;top:29.85px;width:10.00px;height:0.60px;background:#7a7a7a;border-radius:0.3px;"></i>
<i style="left:24.90px;top:29.15px;width:2.00px;height:2.00px;border-radius:50%;background:#8a8a8a;"></i>
<i style="left:1.60px;top:35.50px;width:27.00px;height:5.40px;background:#1e1e1e;border-radius:0.8px;"></i>
<i style="left:12.30px;top:37.85px;width:5.00px;height:0.70px;background:#929292;border-radius:0.3px;"></i>
<i style="left:0.00px;top:41.80px;width:30.00px;height:28.20px;background:#242424;"></i>
<i style="left:0.20px;top:43.35px;width:2.40px;height:3.40px;background:#8c7070;border-radius:0.4px;"></i>
<i style="left:3.15px;top:43.35px;width:2.40px;height:3.40px;background:#8c7070;border-radius:0.4px;"></i>
<i style="left:6.10px;top:43.35px;width:2.40px;height:3.40px;background:#8c7070;border-radius:0.4px;"></i>
<i style="left:9.05px;top:43.35px;width:2.40px;height:3.40px;background:#8c7070;border-radius:0.4px;"></i>
<i style="left:12.00px;top:43.35px;width:2.40px;height:3.40px;background:#8c7070;border-radius:0.4px;"></i>
<i style="left:14.95px;top:43.35px;width:2.40px;height:3.40px;background:#8c7070;border-radius:0.4px;"></i>
<i style="left:17.90px;top:43.35px;width:2.40px;height:3.40px;background:#8c7070;border-radius:0.4px;"></i>
<i style="left:20.85px;top:43.35px;width:2.40px;height:3.40px;background:#8c7070;border-radius:0.4px;"></i>
<i style="left:23.80px;top:43.35px;width:2.40px;height:3.40px;background:#8c7070;border-radius:0.4px;"></i>
<i style="left:26.75px;top:43.35px;width:2.40px;height:3.40px;background:#8c7070;border-radius:0.4px;"></i>
<i style="left:1.70px;top:47.85px;width:2.40px;height:3.40px;background:#8c7070;border-radius:0.4px;"></i>
<i style="left:4.65px;top:47.85px;width:2.40px;height:3.40px;background:#8c7070;border-radius:0.4px;"></i>
<i style="left:7.60px;top:47.85px;width:2.40px;height:3.40px;background:#8c7070;border-radius:0.4px;"></i>
<i style="left:10.55px;top:47.85px;width:2.40px;height:3.40px;background:#8c7070;border-radius:0.4px;"></i>
<i style="left:13.50px;top:47.85px;width:2.40px;height:3.40px;background:#8c7070;border-radius:0.4px;"></i>
<i style="left:16.45px;top:47.85px;width:2.40px;height:3.40px;background:#8c7070;border-radius:0.4px;"></i>
<i style="left:19.40px;top:47.85px;width:2.40px;height:3.40px;background:#8c7070;border-radius:0.4px;"></i>
<i style="left:22.35px;top:47.85px;width:2.40px;height:3.40px;background:#8c7070;border-radius:0.4px;"></i>
<i style="left:25.30px;top:47.85px;width:2.40px;height:3.40px;background:#8c7070;border-radius:0.4px;"></i>
<i style="left:0.40px;top:52.60px;width:3.60px;height:3.20px;background:#484848;border-radius:0.4px;"></i>
<i style="left:4.70px;top:52.60px;width:2.40px;height:3.20px;background:#8c7070;border-radius:0.4px;"></i>
<i style="left:7.65px;top:52.60px;width:2.40px;height:3.20px;background:#8c7070;border-radius:0.4px;"></i>
<i style="left:10.60px;top:52.60px;width:2.40px;height:3.20px;background:#8c7070;border-radius:0.4px;"></i>
<i style="left:13.55px;top:52.60px;width:2.40px;height:3.20px;background:#8c7070;border-radius:0.4px;"></i>
<i style="left:16.50px;top:52.60px;width:2.40px;height:3.20px;background:#8c7070;border-radius:0.4px;"></i>
<i style="left:19.45px;top:52.60px;width:2.40px;height:3.20px;background:#8c7070;border-radius:0.4px;"></i>
<i style="left:22.40px;top:52.60px;width:2.40px;height:3.20px;background:#8c7070;border-radius:0.4px;"></i>
<i style="left:26.60px;top:52.60px;width:3.00px;height:3.20px;background:#484848;border-radius:0.4px;"></i>
<i style="left:0.60px;top:56.85px;width:6.00px;height:3.40px;background:#404040;border-radius:0.4px;"></i>
<i style="left:7.60px;top:56.85px;width:15.20px;height:3.40px;background:#5a5a5a;border-radius:0.4px;"></i>
<i style="left:23.60px;top:56.85px;width:6.00px;height:3.40px;background:#404040;border-radius:0.4px;"></i>
<i style="left:2.20px;top:61.60px;width:1.80px;height:1.80px;background:#d0d0d0;border-radius:0.4px;"></i>
<i style="left:27.20px;top:61.60px;width:1.20px;height:1.80px;background:#aaa;border-radius:0.4px;"></i>
</div>
</div>
<div id="label" class="abs"><span>Organized Layers</span></div>
</body></html>
